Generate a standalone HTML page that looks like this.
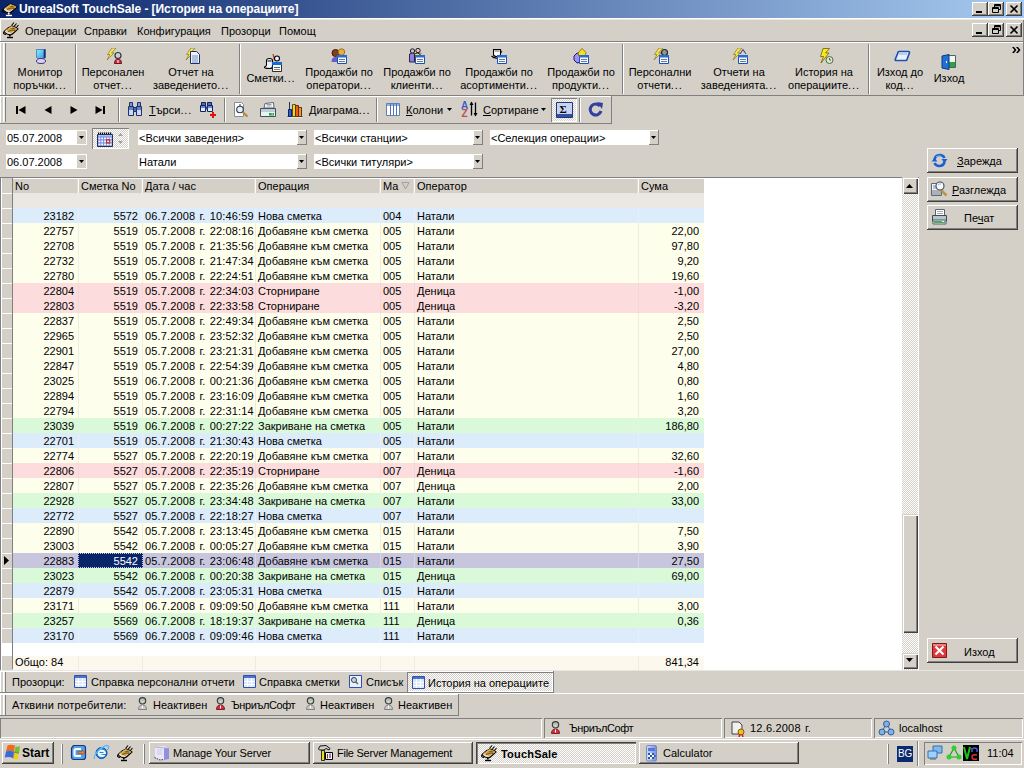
<!DOCTYPE html><html><head><meta charset="utf-8"><style>
html,body{margin:0;padding:0;width:1024px;height:768px;overflow:hidden;background:#d4d0c8;font-family:"Liberation Sans", sans-serif;font-size:11px;color:#000}
div{position:absolute;box-sizing:border-box}
.t{white-space:nowrap}
.r{text-align:right}
u{text-decoration:underline;text-underline-offset:1px;text-decoration-thickness:1px}
</style></head><body>
<div style="left:0px;top:0px;width:1024px;height:18px;background:linear-gradient(to right,#0a246a,#a6caf0)"></div>
<svg style="position:absolute;left:2px;top:0px" width="17" height="17" viewBox="0 0 17 17"><path d="M1 9.5 Q2 11 4 12 L7 13 Q9 12.5 10 11.5 L15 7 Q12 4.5 9 4 Q5 5 1 9.5z" fill="#f0d8d0" stroke="#000" stroke-width="1.1"/><path d="M2 8.5 L8.5 4 L14.5 6.5 L8 11z" fill="#c8a040"/><path d="M4 8 L8 6 L12 7 M5 9.5 L9 8 L12.5 8.5" stroke="#7a5010" stroke-width="1" fill="none"/><path d="M3 9 L9 5" stroke="#f8e8a0" stroke-width=".8"/><path d="M6.5 12.5 L7 14.5" stroke="#fff" stroke-width="1.6"/><path d="M4 15.5 H10" stroke="#fff" stroke-width="1.4"/><path d="M0.5 10 Q0 12 3 12.5" fill="none" stroke="#000" stroke-width="1.1"/></svg>
<div class="t" style="left:19px;top:2px;height:14px;line-height:14px;color:#fff;font-weight:bold;font-size:12px;letter-spacing:-0.08px">UnrealSoft TouchSale - [История на операциите]</div>
<div style="left:972px;top:2px;width:16px;height:14px;background:#d4d0c8;box-shadow: inset -1px -1px #404040, inset 1px 1px #fff, inset -2px -2px #808080"></div>
<div style="left:976px;top:11px;width:6px;height:2px;background:#000"></div>
<div style="left:988px;top:2px;width:16px;height:14px;background:#d4d0c8;box-shadow: inset -1px -1px #404040, inset 1px 1px #fff, inset -2px -2px #808080"></div>
<svg style="position:absolute;left:988px;top:2px" width="16" height="14" viewBox="0 0 16 14"><path d="M6.5 2.5h6v5h-6z M4.5 5.5h6v5h-6z" fill="none" stroke="#000"/><path d="M6 3h7v1.2H6z M4 6h7v1.2H4z" fill="#000"/><rect x="5" y="7" width="5" height="3" fill="#d4d0c8"/></svg>
<div style="left:1006px;top:2px;width:16px;height:14px;background:#d4d0c8;box-shadow: inset -1px -1px #404040, inset 1px 1px #fff, inset -2px -2px #808080"></div>
<svg style="position:absolute;left:1006px;top:2px" width="16" height="14" viewBox="0 0 16 14"><path d="M4.5 3.5 L11.5 10.5 M11.5 3.5 L4.5 10.5" stroke="#000" stroke-width="1.6"/></svg>
<div style="left:0px;top:18px;width:1024px;height:1px;background:#fff"></div>
<div style="left:0px;top:19px;width:1024px;height:1px;background:#ecebe6"></div>
<svg style="position:absolute;left:3px;top:22px" width="17" height="17" viewBox="0 0 17 17"><path d="M8.5 3.5 L11 0.5 M11 4.5 L13.5 1.5 M13 6 L15.5 3" stroke="#000" stroke-width="1.1"/><path d="M1 9.5 Q2 11 4 12 L7 13 Q9 12.5 10 11.5 L15 7 Q12 4.5 9 4 Q5 5 1 9.5z" fill="#f0d8d0" stroke="#000" stroke-width="1.1"/><path d="M2 8.5 L8.5 4 L14.5 6.5 L8 11z" fill="#c8a040"/><path d="M4 8 L8 6 L12 7 M5 9.5 L9 8 L12.5 8.5" stroke="#7a5010" stroke-width="1" fill="none"/><path d="M3 9 L9 5" stroke="#f8e8a0" stroke-width=".8"/><path d="M6.5 12.5 L7 14.5" stroke="#000" stroke-width="1.6"/><path d="M4 15.5 H10" stroke="#000" stroke-width="1.4"/><path d="M0.5 10 Q0 12 3 12.5" fill="none" stroke="#000" stroke-width="1.1"/></svg>
<div class="t" style="left:25px;top:25px;height:13px;line-height:13px;">Операции</div>
<div class="t" style="left:84px;top:25px;height:13px;line-height:13px;">Справки</div>
<div class="t" style="left:137px;top:25px;height:13px;line-height:13px;">Конфигурация</div>
<div class="t" style="left:221px;top:25px;height:13px;line-height:13px;">Прозорци</div>
<div class="t" style="left:279px;top:25px;height:13px;line-height:13px;">Помощ</div>
<div style="left:972px;top:23px;width:16px;height:14px;background:#d4d0c8;box-shadow: inset -1px -1px #404040, inset 1px 1px #fff, inset -2px -2px #808080"></div>
<div style="left:976px;top:32px;width:6px;height:2px;background:#000"></div>
<div style="left:988px;top:23px;width:16px;height:14px;background:#d4d0c8;box-shadow: inset -1px -1px #404040, inset 1px 1px #fff, inset -2px -2px #808080"></div>
<svg style="position:absolute;left:988px;top:23px" width="16" height="14" viewBox="0 0 16 14"><path d="M6.5 2.5h6v5h-6z M4.5 5.5h6v5h-6z" fill="none" stroke="#000"/><path d="M6 3h7v1.2H6z M4 6h7v1.2H4z" fill="#000"/><rect x="5" y="7" width="5" height="3" fill="#d4d0c8"/></svg>
<div style="left:1006px;top:23px;width:16px;height:14px;background:#d4d0c8;box-shadow: inset -1px -1px #404040, inset 1px 1px #fff, inset -2px -2px #808080"></div>
<svg style="position:absolute;left:1006px;top:23px" width="16" height="14" viewBox="0 0 16 14"><path d="M4.5 3.5 L11.5 10.5 M11.5 3.5 L4.5 10.5" stroke="#000" stroke-width="1.6"/></svg>
<div style="left:0px;top:41px;width:1024px;height:1px;background:#808080"></div>
<div style="left:0px;top:42px;width:1024px;height:1px;background:#fff"></div>
<div style="left:0px;top:20px;width:1px;height:21px;background:#fff"></div>
<div style="left:0px;top:43px;width:1px;height:52px;background:#fff"></div>
<div style="left:3px;top:43px;width:1px;height:52px;background:#fff"></div>
<div style="left:4px;top:43px;width:1px;height:52px;background:#eceae6"></div>
<div style="left:5px;top:43px;width:1px;height:52px;background:#808080"></div>
<div style="left:75px;top:44px;width:1px;height:50px;background:#808080"></div>
<div style="left:76px;top:44px;width:1px;height:50px;background:#fff"></div>
<div style="left:239px;top:44px;width:1px;height:50px;background:#808080"></div>
<div style="left:240px;top:44px;width:1px;height:50px;background:#fff"></div>
<div style="left:622px;top:44px;width:1px;height:50px;background:#808080"></div>
<div style="left:623px;top:44px;width:1px;height:50px;background:#fff"></div>
<div style="left:868px;top:44px;width:1px;height:50px;background:#808080"></div>
<div style="left:869px;top:44px;width:1px;height:50px;background:#fff"></div>
<svg style="position:absolute;left:33px;top:48px" width="16" height="16" viewBox="0 0 16 16"><defs><linearGradient id="gm" x1="0" y1="0" x2="1" y2="1"><stop offset="0" stop-color="#8af0ff"/><stop offset="1" stop-color="#2a88d8"/></linearGradient></defs><path d="M3.5 1.5h9v8l-4.5 3-4.5-3z" fill="url(#gm)" stroke="#4070b0" stroke-width=".8"/><path d="M11.5 1.5v8.5" stroke="#1a2a60" stroke-width="1.6"/><ellipse cx="8" cy="13" rx="4.5" ry="2.5" fill="#d8d0f8" stroke="#403870"/></svg>
<div class="t" style="left:-60px;top:66px;height:13px;line-height:13px;width:200px;text-align:center">Монитор</div>
<div class="t" style="left:-60px;top:79px;height:13px;line-height:13px;width:200px;text-align:center">поръчки<span style="letter-spacing:0.9px">...</span></div>
<svg style="position:absolute;left:106px;top:48px" width="16" height="16" viewBox="0 0 16 16"><path d="M6 0 L10 0 L5.5 5 L8 5 L1 12 L4 6.5 L1.5 6.5z" fill="#f8e858" stroke="#8a7020" stroke-width=".7" stroke-linejoin="round"/><circle cx="12" cy="7.5" r="3" fill="#c8d0c8" stroke="#303838" stroke-width="1.2"/><path d="M8.5 15.5 Q8.5 11 12 11 Q15.5 11 15.5 15.5z" fill="#d03040" stroke="#701020"/><path d="M12 12v3" stroke="#fff"/></svg>
<div class="t" style="left:13px;top:66px;height:13px;line-height:13px;width:200px;text-align:center">Персонален</div>
<div class="t" style="left:13px;top:79px;height:13px;line-height:13px;width:200px;text-align:center">отчет<span style="letter-spacing:0.9px">...</span></div>
<svg style="position:absolute;left:185px;top:48px" width="16" height="16" viewBox="0 0 16 16"><path d="M6 0 L10 0 L5.5 5 L8 5 L1 12 L4 6.5 L1.5 6.5z" fill="#f8e858" stroke="#8a7020" stroke-width=".7" stroke-linejoin="round"/><path d="M5.5 3.5h6l3 3v9h-9z" fill="#f0f4fc" stroke="#203060"/><path d="M7 8h6 M7 10h6 M7 12h6 M7 14h6" stroke="#7090c0"/></svg>
<div class="t" style="left:91px;top:66px;height:13px;line-height:13px;width:200px;text-align:center">Отчет на</div>
<div class="t" style="left:91px;top:79px;height:13px;line-height:13px;width:200px;text-align:center">заведението<span style="letter-spacing:0.9px">...</span></div>
<svg style="position:absolute;left:264px;top:54px" width="18" height="18" viewBox="0 0 18 18"><path d="M9 0 L10.5 6" stroke="#c03030" stroke-width="1.2"/><path d="M2.5 6.5 Q2.5 4.5 5.5 4.5 Q8.5 4.5 8.5 6.5 V12.5 Q8.5 14.5 5.5 14.5 Q0 14.5 0.5 13 Q2.5 12 2.5 11z" fill="#f0f4ff" stroke="#000" stroke-width="1.1"/><path d="M3.5 7h4" stroke="#000"/><circle cx="13" cy="4.5" r="2.5" fill="#f8f0f0" stroke="#000" stroke-width="1.1"/><path d="M8.5 8.5h9v9h-9z" fill="#f8fcff" stroke="#000" stroke-width=".8"/><path d="M8 8h10v3H8z" fill="#1a6ad0"/><path d="M10 13.5h6" stroke="#307080"/><path d="M10 15.5h6" stroke="#a08060"/></svg>
<div class="t" style="left:171px;top:72px;height:13px;line-height:13px;width:200px;text-align:center">Сметки<span style="letter-spacing:0.9px">...</span></div>
<svg style="position:absolute;left:331px;top:48px" width="16" height="16" viewBox="0 0 16 16"><circle cx="4.5" cy="5" r="3.5" fill="#804020" stroke="#401808"/><circle cx="10.5" cy="4" r="3.2" fill="#e8b040" stroke="#a07020"/><path d="M0.5 14 Q0.5 9 4.5 9 Q8 9 8 14z" fill="#6060d0"/><path d="M6.5 7.5h9v8h-9z" fill="#f4f8ff" stroke="#1a50b0"/><path d="M6 7h10v2.5H6z" fill="#2a6ad8"/><path d="M8 11.5h6 M8 13.5h6" stroke="#6a7a9a"/></svg>
<div class="t" style="left:239px;top:66px;height:13px;line-height:13px;width:200px;text-align:center">Продажби по</div>
<div class="t" style="left:239px;top:79px;height:13px;line-height:13px;width:200px;text-align:center">оператори<span style="letter-spacing:0.9px">...</span></div>
<svg style="position:absolute;left:409px;top:48px" width="16" height="16" viewBox="0 0 16 16"><circle cx="3.5" cy="3" r="2.2" fill="#c0c0c8" stroke="#202020"/><circle cx="9" cy="2.5" r="2.2" fill="#e0c0c0" stroke="#202020"/><path d="M0.5 14 V6 Q3.5 4 6 6 V14z" fill="#9080d0" stroke="#302060"/><path d="M5.5 13 V6 Q8.5 4 11 6 V8z" fill="#f0e040" stroke="#302010"/><path d="M10 5 Q12 4 13 6" fill="#d03030"/><path d="M6.5 7.5h9v8h-9z" fill="#f4f8ff" stroke="#1a50b0"/><path d="M6 7h10v2.5H6z" fill="#2a6ad8"/><path d="M8 11.5h6 M8 13.5h6" stroke="#6a7a9a"/></svg>
<div class="t" style="left:317px;top:66px;height:13px;line-height:13px;width:200px;text-align:center">Продажби по</div>
<div class="t" style="left:317px;top:79px;height:13px;line-height:13px;width:200px;text-align:center">клиенти<span style="letter-spacing:0.9px">...</span></div>
<svg style="position:absolute;left:491px;top:48px" width="16" height="16" viewBox="0 0 16 16"><path d="M2.5 1.5h7v5q0 2-3.5 2t-3.5-2z" fill="#fff" stroke="#000" stroke-width="1.1"/><path d="M9.5 2.5 Q12 3 9.5 5.5" fill="none" stroke="#000"/><path d="M0.5 8 Q3 10.5 7 10" fill="none" stroke="#000" stroke-width="1.1"/><path d="M3.5 3h5" stroke="#606060"/><path d="M6.5 7.5h9v8h-9z" fill="#f4f8ff" stroke="#1a50b0"/><path d="M6 7h10v2.5H6z" fill="#2a6ad8"/><path d="M8 11.5h6 M8 13.5h6" stroke="#6a7a9a"/></svg>
<div class="t" style="left:399px;top:66px;height:13px;line-height:13px;width:200px;text-align:center">Продажби по</div>
<div class="t" style="left:399px;top:79px;height:13px;line-height:13px;width:200px;text-align:center">асортименти<span style="letter-spacing:0.9px">...</span></div>
<svg style="position:absolute;left:573px;top:48px" width="16" height="16" viewBox="0 0 16 16"><path d="M1 8 L4 5 L8 6 L8 14 L4 15 L1 12z" fill="#a090f0" stroke="#201860"/><path d="M5 5 L9 0.5 L13 4.5 L12 8 H6z" fill="#f8e020" stroke="#806000" stroke-width=".8"/><path d="M6.5 7.5h9v8h-9z" fill="#f4f8ff" stroke="#1a50b0"/><path d="M6 7h10v2.5H6z" fill="#2a6ad8"/><path d="M8 11.5h6 M8 13.5h6" stroke="#6a7a9a"/></svg>
<div class="t" style="left:481px;top:66px;height:13px;line-height:13px;width:200px;text-align:center">Продажби по</div>
<div class="t" style="left:481px;top:79px;height:13px;line-height:13px;width:200px;text-align:center">продукти<span style="letter-spacing:0.9px">...</span></div>
<svg style="position:absolute;left:653px;top:48px" width="16" height="16" viewBox="0 0 16 16"><path d="M6 0 L10 0 L5.5 5 L8 5 L1 12 L4 6.5 L1.5 6.5z" fill="#f8e858" stroke="#8a7020" stroke-width=".7" stroke-linejoin="round"/><circle cx="11.5" cy="4.5" r="3" fill="#909890" stroke="#202820" stroke-width="1.2"/><path d="M6.5 7.5h9v8h-9z" fill="#f4f8ff" stroke="#1a50b0"/><path d="M6 7h10v2.5H6z" fill="#2a6ad8"/><path d="M8 11.5h6 M8 13.5h6" stroke="#6a7a9a"/></svg>
<div class="t" style="left:560px;top:66px;height:13px;line-height:13px;width:200px;text-align:center">Персонални</div>
<div class="t" style="left:560px;top:79px;height:13px;line-height:13px;width:200px;text-align:center">отчети<span style="letter-spacing:0.9px">...</span></div>
<svg style="position:absolute;left:732px;top:48px" width="16" height="16" viewBox="0 0 16 16"><path d="M6 0 L10 0 L5.5 5 L8 5 L1 12 L4 6.5 L1.5 6.5z" fill="#f8e858" stroke="#8a7020" stroke-width=".7" stroke-linejoin="round"/><path d="M8 6 L11 1.5 L14 6" fill="none" stroke="#303860"/><path d="M6.5 7.5h9v8h-9z" fill="#f4f8ff" stroke="#1a50b0"/><path d="M6 7h10v2.5H6z" fill="#2a6ad8"/><path d="M8 11.5h6 M8 13.5h6" stroke="#6a7a9a"/></svg>
<div class="t" style="left:639px;top:66px;height:13px;line-height:13px;width:200px;text-align:center">Отчети на</div>
<div class="t" style="left:639px;top:79px;height:13px;line-height:13px;width:200px;text-align:center">заведенията<span style="letter-spacing:0.9px">...</span></div>
<svg style="position:absolute;left:818px;top:48px" width="16" height="16" viewBox="0 0 16 16"><path d="M5 0.5 L11.5 0.5 L7.5 5 L11 5 L3 15 L5.5 8.5 L2.5 8.5z" fill="#f8e820" stroke="#706000" stroke-width=".8" stroke-linejoin="round"/><circle cx="11.5" cy="12" r="3.5" fill="#d8e8d0" stroke="#507040"/><path d="M11.5 10v2h1.5" stroke="#404040" fill="none" stroke-width=".8"/></svg>
<div class="t" style="left:724px;top:66px;height:13px;line-height:13px;width:200px;text-align:center">История на</div>
<div class="t" style="left:724px;top:79px;height:13px;line-height:13px;width:200px;text-align:center">операциите<span style="letter-spacing:0.9px">...</span></div>
<svg style="position:absolute;left:893px;top:49px" width="18" height="14" viewBox="0 0 18 14"><path d="M5 3.5 Q5 2.5 6 2.5 H15.5 Q16.5 2.5 16.5 3.5 L14 10.5 Q13.8 11.5 12.8 11.5 H3 Q2 11.5 2.2 10.5z" fill="#e8f0ff" stroke="#2050b0" stroke-width="1.6"/><path d="M6 5h8" stroke="#90a8d8"/><path d="M0 5h2 M0 7h2" stroke="#b0c8e8"/></svg>
<div class="t" style="left:800px;top:66px;height:13px;line-height:13px;width:200px;text-align:center">Изход до</div>
<div class="t" style="left:800px;top:79px;height:13px;line-height:13px;width:200px;text-align:center">код<span style="letter-spacing:0.9px">...</span></div>
<svg style="position:absolute;left:941px;top:54px" width="16" height="16" viewBox="0 0 16 16"><path d="M7.5 1.5h7v12h-7z" fill="#f0f8f0" stroke="#506070"/><path d="M8 8h6v5H8z" fill="#30a040"/><path d="M1 2 L8 0.5 V15.5 L1 14z" fill="#2070d8" stroke="#103878"/><path d="M5 7h1v2H5z" fill="#fff"/></svg>
<div class="t" style="left:849px;top:72px;height:13px;line-height:13px;width:200px;text-align:center">Изход</div>
<svg style="position:absolute;left:1012px;top:47px" width="9" height="6" viewBox="0 0 9 6"><path d="M0 0h2l2.5 3L2 6H0l2.5-3z M4 0h2l2.5 3L6 6H4l2.5-3z" fill="#000"/></svg>
<div style="left:1023px;top:20px;width:1px;height:76px;background:#808080"></div>
<div style="left:0px;top:95px;width:1024px;height:1px;background:#808080"></div>
<div style="left:0px;top:96px;width:612px;height:1px;background:#fff"></div>
<div style="left:0px;top:96px;width:612px;height:28px;background:#d4d0c8;box-shadow: inset -1px -1px #808080, inset 1px 1px #fff"></div>
<div style="left:3px;top:97px;width:1px;height:25px;background:#fff"></div>
<div style="left:4px;top:97px;width:1px;height:25px;background:#eceae6"></div>
<div style="left:5px;top:97px;width:1px;height:25px;background:#808080"></div>
<div style="left:118px;top:98px;width:1px;height:24px;background:#808080"></div>
<div style="left:119px;top:98px;width:1px;height:24px;background:#fff"></div>
<div style="left:224px;top:98px;width:1px;height:24px;background:#808080"></div>
<div style="left:225px;top:98px;width:1px;height:24px;background:#fff"></div>
<div style="left:376px;top:98px;width:1px;height:24px;background:#808080"></div>
<div style="left:377px;top:98px;width:1px;height:24px;background:#fff"></div>
<div style="left:579px;top:98px;width:1px;height:24px;background:#808080"></div>
<div style="left:580px;top:98px;width:1px;height:24px;background:#fff"></div>
<svg style="position:absolute;left:16px;top:106px" width="10" height="8" viewBox="0 0 10 8"><path d="M0 0h2v8H0z M9.5 0 L2.5 4 L9.5 8z" fill="#000"/></svg>
<svg style="position:absolute;left:44px;top:106px" width="8" height="8" viewBox="0 0 8 8"><path d="M7.5 0 L0.5 4 L7.5 8z" fill="#000"/></svg>
<svg style="position:absolute;left:70px;top:106px" width="8" height="8" viewBox="0 0 8 8"><path d="M0.5 0 L7.5 4 L0.5 8z" fill="#000"/></svg>
<svg style="position:absolute;left:95px;top:106px" width="10" height="8" viewBox="0 0 10 8"><path d="M8 0h2v8H8z M0.5 0 L7.5 4 L0.5 8z" fill="#000"/></svg>
<svg style="position:absolute;left:127px;top:101px" width="16" height="16" viewBox="0 0 16 16"><path d="M2.5 1.5h3v4h-3z M10.5 1.5h3v4h-3z" fill="#8098c8" stroke="#203070"/><path d="M1.5 5.5h5v9h-5z M9.5 5.5h5v9h-5z" fill="#c8d8f0" stroke="#203070"/><path d="M6.5 6.5h3v4h-3z" fill="#5068a8" stroke="#203070"/><path d="M2 6h4v3H2z M10 6h4v3h-4z" fill="#6080c0"/></svg>
<div class="t" style="left:149px;top:104px;height:13px;line-height:13px;"><u>Т</u>ърси<span style="letter-spacing:0.9px">...</span></div>
<svg style="position:absolute;left:200px;top:101px" width="18" height="18" viewBox="0 0 18 18"><path d="M1.5 1.5h4v3h-4z M7.5 1.5h4v3h-4z" fill="#5070b0" stroke="#102060"/><path d="M0.5 4.5h5v6h-5z M7.5 4.5h5v6h-5z" fill="#e0ecff" stroke="#102060"/><path d="M5.5 5.5h2v3h-2z" fill="#304890"/><path d="M1 5h4v2H1z M8 5h4v2H8z" fill="#6a88c8"/><path d="M12 11h2v6h-2z M10 13h6v2h-6z" fill="#e01010"/></svg>
<svg style="position:absolute;left:234px;top:102px" width="16" height="16" viewBox="0 0 16 16"><path d="M0.5 0.5h7l2 2v12h-9z" fill="#fff" stroke="#8090a0"/><circle cx="6" cy="7.5" r="3.3" fill="#e8f0f8" stroke="#303840" stroke-width="1.1"/><path d="M6 2 L6 4" stroke="#303840"/><path d="M8.5 10 L13.5 14.5" stroke="#b08840" stroke-width="2.2"/></svg>
<svg style="position:absolute;left:260px;top:102px" width="16" height="16" viewBox="0 0 16 16"><path d="M5 1.5 L13.5 0.5 L14 6 L4 6z" fill="#fff" stroke="#5a6470"/><path d="M6.5 2.5h5 M6.5 4h5" stroke="#90a0b0"/><path d="M0.5 6.5h15v8h-15z" fill="#c0ccd4" stroke="#405060"/><path d="M1 10h14v4H1z" fill="#e8f4f0"/><path d="M9 11h5v2.5H9z" fill="#30a050"/><path d="M11.5 11.5h1.5v1h-1.5z" fill="#c0ffc0"/></svg>
<svg style="position:absolute;left:287px;top:101px" width="16" height="17" viewBox="0 0 16 17"><path d="M0.5 15.5h15" stroke="#304060"/><path d="M0.5 16.5h15" stroke="#e0e8f0"/><path d="M1.5 8.5h3v7h-3z" fill="#3060d0" stroke="#102060"/><path d="M2.5 1v7" stroke="#203060"/><path d="M5.5 3.5h3v12h-3z" fill="#f0d820" stroke="#605010"/><path d="M8.5 4.5h3v11h-3z" fill="#e86020" stroke="#603010"/><path d="M11.5 6.5h3v9h-3z" fill="#f09830" stroke="#603010"/></svg>
<div class="t" style="left:309px;top:104px;height:13px;line-height:13px;">Диаграма<span style="letter-spacing:0.9px">...</span></div>
<svg style="position:absolute;left:385px;top:101px" width="16" height="16" viewBox="0 0 16 16"><path d="M1.5 2.5h13v12h-13z" fill="#fff" stroke="#6080b0"/><path d="M2 3h12v2H2z" fill="#90b0e0"/><path d="M5.5 3v11 M8.5 3v11 M11.5 3v11" stroke="#5070c0"/></svg>
<div class="t" style="left:406px;top:104px;height:13px;line-height:13px;"><u>К</u>олони</div>
<svg style="position:absolute;left:447px;top:108px" width="5" height="3" viewBox="0 0 5 3"><path d="M0 0h5L2.5 3z" fill="#000"/></svg>
<svg style="position:absolute;left:461px;top:100px" width="18" height="18" viewBox="0 0 18 18"><text x="0" y="8.5" font-family="Liberation Sans" font-size="10" font-weight="bold" fill="#3a60c8">A</text><text x="0.5" y="17" font-family="Liberation Sans" font-size="10" font-weight="bold" fill="#c05050">Z</text><path d="M10.5 2.5v13 M14.5 2.5v13" stroke="#000" stroke-width="1.3"/><path d="M8.5 5 L10.5 1.5 L12.5 5z M12.5 13 L14.5 16.5 L16.5 13z" fill="#000"/></svg>
<div class="t" style="left:483px;top:104px;height:13px;line-height:13px;"><u>С</u>ортиране</div>
<svg style="position:absolute;left:541px;top:108px" width="5" height="3" viewBox="0 0 5 3"><path d="M0 0h5L2.5 3z" fill="#000"/></svg>
<div style="left:551px;top:98px;width:26px;height:24px;background-color:#fff;background-image:linear-gradient(45deg,#d4d0c8 25%,transparent 25%,transparent 75%,#d4d0c8 75%),linear-gradient(45deg,#d4d0c8 25%,transparent 25%,transparent 75%,#d4d0c8 75%);background-size:2px 2px;background-position:0 0,1px 1px;box-shadow: inset 1px 1px #808080, inset -1px -1px #fff"></div>
<svg style="position:absolute;left:556px;top:102px" width="17" height="16" viewBox="0 0 17 16"><path d="M0.5 0.5h16v15H0.5z" fill="#c8d4f0" stroke="#203880"/><path d="M1 12h15v3H1z" fill="#3050a0"/><text x="3.5" y="11" font-family="Liberation Serif" font-size="11" font-weight="bold" fill="#000">&#931;</text></svg>
<svg style="position:absolute;left:587px;top:101px" width="18" height="17" viewBox="0 0 18 17"><path d="M13 5 A5.5 5.5 0 1 0 14 10" fill="none" stroke="#3040a0" stroke-width="3"/><path d="M10 1 L16 2 L15 8z" fill="#3040a0"/></svg>
<div style="left:6px;top:130px;width:81px;height:15px;background:#fff"></div>
<div class="t" style="left:7px;top:131px;height:14px;line-height:14px;font-size:11px">05.07.2008</div>
<div style="left:77px;top:131px;width:9px;height:13px;background:#d4d0c8"></div>
<svg style="position:absolute;left:79px;top:136px" width="5" height="3" viewBox="0 0 5 3"><path d="M0 0h5L2.5 3z" fill="#000"/></svg>
<div style="left:6px;top:154px;width:81px;height:15px;background:#fff"></div>
<div class="t" style="left:7px;top:155px;height:14px;line-height:14px;font-size:11px">06.07.2008</div>
<div style="left:77px;top:155px;width:9px;height:13px;background:#d4d0c8"></div>
<svg style="position:absolute;left:79px;top:160px" width="5" height="3" viewBox="0 0 5 3"><path d="M0 0h5L2.5 3z" fill="#000"/></svg>
<div style="left:92px;top:128px;width:37px;height:21px;background-color:#fff;background-image:linear-gradient(45deg,#d4d0c8 25%,transparent 25%,transparent 75%,#d4d0c8 75%),linear-gradient(45deg,#d4d0c8 25%,transparent 25%,transparent 75%,#d4d0c8 75%);background-size:2px 2px;background-position:0 0,1px 1px;box-shadow: inset 1px 1px #808080, inset -1px -1px #fff"></div>
<svg style="position:absolute;left:97px;top:132px" width="16" height="15" viewBox="0 0 16 15"><defs><linearGradient id="gc" x1="0" y1="0" x2="1" y2="1"><stop offset="0" stop-color="#6a80e0"/><stop offset="1" stop-color="#8898d8"/></linearGradient></defs><path d="M0.5 2.5h15v12h-15z" fill="url(#gc)" stroke="#203060"/><path d="M1 3h14v1.5H1z" fill="#a8c0f8"/><rect x="1" y="0.5" width="1.2" height="1.5" fill="#000"/><rect x="3" y="0.5" width="1.2" height="1.5" fill="#000"/><rect x="5" y="0.5" width="1.2" height="1.5" fill="#000"/><rect x="7" y="0.5" width="1.2" height="1.5" fill="#000"/><rect x="9" y="0.5" width="1.2" height="1.5" fill="#000"/><rect x="11" y="0.5" width="1.2" height="1.5" fill="#000"/><rect x="13" y="0.5" width="1.2" height="1.5" fill="#000"/><rect x="1.5" y="5.5" width="1.8" height="1.8" fill="#fff"/><rect x="4.3" y="5.5" width="1.8" height="1.8" fill="#fff"/><rect x="7.1" y="5.5" width="1.8" height="1.8" fill="#fff"/><rect x="9.899999999999999" y="5.5" width="1.8" height="1.8" fill="#fff"/><rect x="12.7" y="5.5" width="1.8" height="1.8" fill="#fff"/><rect x="1.5" y="8.5" width="1.8" height="1.8" fill="#fff"/><rect x="4.3" y="8.5" width="1.8" height="1.8" fill="#fff"/><rect x="7.1" y="8.5" width="1.8" height="1.8" fill="#fff"/><rect x="9.899999999999999" y="8.5" width="1.8" height="1.8" fill="#fff"/><rect x="12.7" y="8.5" width="1.8" height="1.8" fill="#fff"/><rect x="1.5" y="11.5" width="1.8" height="1.8" fill="#fff"/><rect x="4.3" y="11.5" width="1.8" height="1.8" fill="#fff"/><rect x="7.1" y="11.5" width="1.8" height="1.8" fill="#fff"/><rect x="9.899999999999999" y="11.5" width="1.8" height="1.8" fill="#fff"/><rect x="12.7" y="11.5" width="1.8" height="1.8" fill="#fff"/><rect x="9.6" y="7.8" width="3.2" height="3.2" fill="none" stroke="#c02020" stroke-width="1"/></svg>
<svg style="position:absolute;left:117px;top:132px" width="7" height="13" viewBox="0 0 7 13"><path d="M3.5 1 L6 4 H1z M1 9 H6 L3.5 12z" fill="#a0a0a0"/></svg>
<div style="left:138px;top:130px;width:169px;height:15px;background:#fff"></div>
<div class="t" style="left:139px;top:132px;height:13px;line-height:13px;">&lt;Всички заведения&gt;</div>
<div style="left:297px;top:130px;width:10px;height:15px;background:#d4d0c8;box-shadow: inset -1px -1px #808080, inset 1px 1px #fff"></div>
<svg style="position:absolute;left:299px;top:136px" width="5" height="3" viewBox="0 0 5 3"><path d="M0 0h5L2.5 3z" fill="#000"/></svg>
<div style="left:314px;top:130px;width:169px;height:15px;background:#fff"></div>
<div class="t" style="left:315px;top:132px;height:13px;line-height:13px;">&lt;Всички станции&gt;</div>
<div style="left:473px;top:130px;width:10px;height:15px;background:#d4d0c8;box-shadow: inset -1px -1px #808080, inset 1px 1px #fff"></div>
<svg style="position:absolute;left:475px;top:136px" width="5" height="3" viewBox="0 0 5 3"><path d="M0 0h5L2.5 3z" fill="#000"/></svg>
<div style="left:490px;top:130px;width:169px;height:15px;background:#fff"></div>
<div class="t" style="left:491px;top:132px;height:13px;line-height:13px;">&lt;Селекция операции&gt;</div>
<div style="left:649px;top:130px;width:10px;height:15px;background:#d4d0c8;box-shadow: inset -1px -1px #808080, inset 1px 1px #fff"></div>
<svg style="position:absolute;left:651px;top:136px" width="5" height="3" viewBox="0 0 5 3"><path d="M0 0h5L2.5 3z" fill="#000"/></svg>
<div style="left:138px;top:154px;width:169px;height:15px;background:#fff"></div>
<div class="t" style="left:139px;top:156px;height:13px;line-height:13px;">Натали</div>
<div style="left:297px;top:154px;width:10px;height:15px;background:#d4d0c8;box-shadow: inset -1px -1px #808080, inset 1px 1px #fff"></div>
<svg style="position:absolute;left:299px;top:160px" width="5" height="3" viewBox="0 0 5 3"><path d="M0 0h5L2.5 3z" fill="#000"/></svg>
<div style="left:314px;top:154px;width:169px;height:15px;background:#fff"></div>
<div class="t" style="left:315px;top:156px;height:13px;line-height:13px;">&lt;Всички титуляри&gt;</div>
<div style="left:473px;top:154px;width:10px;height:15px;background:#d4d0c8;box-shadow: inset -1px -1px #808080, inset 1px 1px #fff"></div>
<svg style="position:absolute;left:475px;top:160px" width="5" height="3" viewBox="0 0 5 3"><path d="M0 0h5L2.5 3z" fill="#000"/></svg>
<div style="left:0px;top:177px;width:919px;height:493px;background:#fff"></div>
<div style="left:0px;top:177px;width:919px;height:1px;background:#808080"></div>
<div style="left:0px;top:177px;width:1px;height:493px;background:#808080"></div>
<div style="left:918px;top:178px;width:1px;height:492px;background:#fff"></div>
<div style="left:1px;top:178px;width:12px;height:492px;background:#d4d0c8"></div>
<div style="left:1px;top:178px;width:1px;height:492px;background:#fff"></div>
<div style="left:12px;top:178px;width:1px;height:491px;background:#808080"></div>
<div style="left:13px;top:178px;width:691px;height:1px;background:#fff"></div>
<div style="left:13px;top:179px;width:64px;height:14px;background:#d4d0c8"></div>
<div style="left:77px;top:179px;width:1px;height:14px;background:#dedbd5"></div>
<div style="left:78px;top:179px;width:1px;height:14px;background:#fdfcfa"></div>
<div style="left:79px;top:179px;width:62px;height:14px;background:#d4d0c8"></div>
<div style="left:141px;top:179px;width:1px;height:14px;background:#dedbd5"></div>
<div style="left:142px;top:179px;width:1px;height:14px;background:#fdfcfa"></div>
<div style="left:143px;top:179px;width:111px;height:14px;background:#d4d0c8"></div>
<div style="left:254px;top:179px;width:1px;height:14px;background:#dedbd5"></div>
<div style="left:255px;top:179px;width:1px;height:14px;background:#fdfcfa"></div>
<div style="left:256px;top:179px;width:123px;height:14px;background:#d4d0c8"></div>
<div style="left:379px;top:179px;width:1px;height:14px;background:#dedbd5"></div>
<div style="left:380px;top:179px;width:1px;height:14px;background:#fdfcfa"></div>
<div style="left:381px;top:179px;width:32px;height:14px;background:#d4d0c8"></div>
<div style="left:413px;top:179px;width:1px;height:14px;background:#dedbd5"></div>
<div style="left:414px;top:179px;width:1px;height:14px;background:#fdfcfa"></div>
<div style="left:415px;top:179px;width:222px;height:14px;background:#d4d0c8"></div>
<div style="left:637px;top:179px;width:1px;height:14px;background:#dedbd5"></div>
<div style="left:638px;top:179px;width:1px;height:14px;background:#fdfcfa"></div>
<div style="left:639px;top:179px;width:65px;height:14px;background:#d4d0c8"></div>
<div class="t" style="left:15px;top:180px;height:13px;line-height:13px;">No</div>
<div class="t" style="left:81px;top:180px;height:13px;line-height:13px;">Сметка No</div>
<div class="t" style="left:145px;top:180px;height:13px;line-height:13px;">Дата / час</div>
<div class="t" style="left:258px;top:180px;height:13px;line-height:13px;">Операция</div>
<div class="t" style="left:383px;top:180px;height:13px;line-height:13px;">Ма</div>
<div class="t" style="left:417px;top:180px;height:13px;line-height:13px;">Оператор</div>
<div class="t" style="left:641px;top:180px;height:13px;line-height:13px;">Сума</div>
<svg style="position:absolute;left:401px;top:181px" width="9" height="9" viewBox="0 0 9 9"><path d="M1 1.5h7L4.5 8z" fill="none" stroke="#a0a0a0"/></svg>
<div style="left:13px;top:193px;width:691px;height:15px;background:#ebe8e3"></div>
<div style="left:1px;top:193px;width:11px;height:1px;background:#fff"></div>
<div style="left:0;top:0;width:1024px;height:768px">
<div style="left:13px;top:208px;width:691px;height:15px;background:#dcecfa"></div>
<div style="left:1px;top:208px;width:11px;height:1px;background:#fff"></div>
<div style="left:78px;top:208px;width:1px;height:15px;background:#e8f0f8"></div>
<div style="left:142px;top:208px;width:1px;height:15px;background:#e8f0f8"></div>
<div style="left:255px;top:208px;width:1px;height:15px;background:#e8f0f8"></div>
<div style="left:380px;top:208px;width:1px;height:15px;background:#e8f0f8"></div>
<div style="left:414px;top:208px;width:1px;height:15px;background:#e8f0f8"></div>
<div style="left:638px;top:208px;width:1px;height:15px;background:#e8f0f8"></div>
<div class="t" style="left:13px;top:209px;height:14px;line-height:14px;width:61px;text-align:right;color:#000">23182</div>
<div class="t" style="left:79px;top:209px;height:14px;line-height:14px;width:59px;text-align:right;color:#000">5572</div>
<div class="t" style="left:145px;top:209px;height:14px;line-height:14px;color:#000;word-spacing:1px;letter-spacing:0.15px">06.7.2008 г. 10:46:59</div>
<div style="left:256px;top:208px;width:124px;height:15px;overflow:hidden"><div class="t" style="left:2px;top:1px;line-height:14px">Нова сметка</div></div>
<div class="t" style="left:383px;top:209px;height:14px;line-height:14px;color:#000">004</div>
<div class="t" style="left:417px;top:209px;height:14px;line-height:14px;color:#000">Натали</div>
<div class="t" style="left:639px;top:209px;height:14px;line-height:14px;width:60px;text-align:right;color:#000"></div>
<div style="left:13px;top:223px;width:691px;height:15px;background:#fefeec"></div>
<div style="left:1px;top:223px;width:11px;height:1px;background:#fff"></div>
<div style="left:78px;top:223px;width:1px;height:15px;background:#eeeee0"></div>
<div style="left:142px;top:223px;width:1px;height:15px;background:#eeeee0"></div>
<div style="left:255px;top:223px;width:1px;height:15px;background:#eeeee0"></div>
<div style="left:380px;top:223px;width:1px;height:15px;background:#eeeee0"></div>
<div style="left:414px;top:223px;width:1px;height:15px;background:#eeeee0"></div>
<div style="left:638px;top:223px;width:1px;height:15px;background:#eeeee0"></div>
<div class="t" style="left:13px;top:224px;height:14px;line-height:14px;width:61px;text-align:right;color:#000">22757</div>
<div class="t" style="left:79px;top:224px;height:14px;line-height:14px;width:59px;text-align:right;color:#000">5519</div>
<div class="t" style="left:145px;top:224px;height:14px;line-height:14px;color:#000;word-spacing:1px;letter-spacing:0.15px">05.7.2008 г. 22:08:16</div>
<div style="left:256px;top:223px;width:124px;height:15px;overflow:hidden"><div class="t" style="left:2px;top:1px;line-height:14px">Добавяне към сметка</div></div>
<div class="t" style="left:383px;top:224px;height:14px;line-height:14px;color:#000">005</div>
<div class="t" style="left:417px;top:224px;height:14px;line-height:14px;color:#000">Натали</div>
<div class="t" style="left:639px;top:224px;height:14px;line-height:14px;width:60px;text-align:right;color:#000">22,00</div>
<div style="left:13px;top:238px;width:691px;height:15px;background:#fefeec"></div>
<div style="left:1px;top:238px;width:11px;height:1px;background:#fff"></div>
<div style="left:78px;top:238px;width:1px;height:15px;background:#eeeee0"></div>
<div style="left:142px;top:238px;width:1px;height:15px;background:#eeeee0"></div>
<div style="left:255px;top:238px;width:1px;height:15px;background:#eeeee0"></div>
<div style="left:380px;top:238px;width:1px;height:15px;background:#eeeee0"></div>
<div style="left:414px;top:238px;width:1px;height:15px;background:#eeeee0"></div>
<div style="left:638px;top:238px;width:1px;height:15px;background:#eeeee0"></div>
<div class="t" style="left:13px;top:239px;height:14px;line-height:14px;width:61px;text-align:right;color:#000">22708</div>
<div class="t" style="left:79px;top:239px;height:14px;line-height:14px;width:59px;text-align:right;color:#000">5519</div>
<div class="t" style="left:145px;top:239px;height:14px;line-height:14px;color:#000;word-spacing:1px;letter-spacing:0.15px">05.7.2008 г. 21:35:56</div>
<div style="left:256px;top:238px;width:124px;height:15px;overflow:hidden"><div class="t" style="left:2px;top:1px;line-height:14px">Добавяне към сметка</div></div>
<div class="t" style="left:383px;top:239px;height:14px;line-height:14px;color:#000">005</div>
<div class="t" style="left:417px;top:239px;height:14px;line-height:14px;color:#000">Натали</div>
<div class="t" style="left:639px;top:239px;height:14px;line-height:14px;width:60px;text-align:right;color:#000">97,80</div>
<div style="left:13px;top:253px;width:691px;height:15px;background:#fefeec"></div>
<div style="left:1px;top:253px;width:11px;height:1px;background:#fff"></div>
<div style="left:78px;top:253px;width:1px;height:15px;background:#eeeee0"></div>
<div style="left:142px;top:253px;width:1px;height:15px;background:#eeeee0"></div>
<div style="left:255px;top:253px;width:1px;height:15px;background:#eeeee0"></div>
<div style="left:380px;top:253px;width:1px;height:15px;background:#eeeee0"></div>
<div style="left:414px;top:253px;width:1px;height:15px;background:#eeeee0"></div>
<div style="left:638px;top:253px;width:1px;height:15px;background:#eeeee0"></div>
<div class="t" style="left:13px;top:254px;height:14px;line-height:14px;width:61px;text-align:right;color:#000">22732</div>
<div class="t" style="left:79px;top:254px;height:14px;line-height:14px;width:59px;text-align:right;color:#000">5519</div>
<div class="t" style="left:145px;top:254px;height:14px;line-height:14px;color:#000;word-spacing:1px;letter-spacing:0.15px">05.7.2008 г. 21:47:34</div>
<div style="left:256px;top:253px;width:124px;height:15px;overflow:hidden"><div class="t" style="left:2px;top:1px;line-height:14px">Добавяне към сметка</div></div>
<div class="t" style="left:383px;top:254px;height:14px;line-height:14px;color:#000">005</div>
<div class="t" style="left:417px;top:254px;height:14px;line-height:14px;color:#000">Натали</div>
<div class="t" style="left:639px;top:254px;height:14px;line-height:14px;width:60px;text-align:right;color:#000">9,20</div>
<div style="left:13px;top:268px;width:691px;height:15px;background:#fefeec"></div>
<div style="left:1px;top:268px;width:11px;height:1px;background:#fff"></div>
<div style="left:78px;top:268px;width:1px;height:15px;background:#eeeee0"></div>
<div style="left:142px;top:268px;width:1px;height:15px;background:#eeeee0"></div>
<div style="left:255px;top:268px;width:1px;height:15px;background:#eeeee0"></div>
<div style="left:380px;top:268px;width:1px;height:15px;background:#eeeee0"></div>
<div style="left:414px;top:268px;width:1px;height:15px;background:#eeeee0"></div>
<div style="left:638px;top:268px;width:1px;height:15px;background:#eeeee0"></div>
<div class="t" style="left:13px;top:269px;height:14px;line-height:14px;width:61px;text-align:right;color:#000">22780</div>
<div class="t" style="left:79px;top:269px;height:14px;line-height:14px;width:59px;text-align:right;color:#000">5519</div>
<div class="t" style="left:145px;top:269px;height:14px;line-height:14px;color:#000;word-spacing:1px;letter-spacing:0.15px">05.7.2008 г. 22:24:51</div>
<div style="left:256px;top:268px;width:124px;height:15px;overflow:hidden"><div class="t" style="left:2px;top:1px;line-height:14px">Добавяне към сметка</div></div>
<div class="t" style="left:383px;top:269px;height:14px;line-height:14px;color:#000">005</div>
<div class="t" style="left:417px;top:269px;height:14px;line-height:14px;color:#000">Натали</div>
<div class="t" style="left:639px;top:269px;height:14px;line-height:14px;width:60px;text-align:right;color:#000">19,60</div>
<div style="left:13px;top:283px;width:691px;height:15px;background:#fcdcdc"></div>
<div style="left:1px;top:283px;width:11px;height:1px;background:#fff"></div>
<div style="left:78px;top:283px;width:1px;height:15px;background:#f0d8d8"></div>
<div style="left:142px;top:283px;width:1px;height:15px;background:#f0d8d8"></div>
<div style="left:255px;top:283px;width:1px;height:15px;background:#f0d8d8"></div>
<div style="left:380px;top:283px;width:1px;height:15px;background:#f0d8d8"></div>
<div style="left:414px;top:283px;width:1px;height:15px;background:#f0d8d8"></div>
<div style="left:638px;top:283px;width:1px;height:15px;background:#f0d8d8"></div>
<div class="t" style="left:13px;top:284px;height:14px;line-height:14px;width:61px;text-align:right;color:#000">22804</div>
<div class="t" style="left:79px;top:284px;height:14px;line-height:14px;width:59px;text-align:right;color:#000">5519</div>
<div class="t" style="left:145px;top:284px;height:14px;line-height:14px;color:#000;word-spacing:1px;letter-spacing:0.15px">05.7.2008 г. 22:34:03</div>
<div style="left:256px;top:283px;width:124px;height:15px;overflow:hidden"><div class="t" style="left:2px;top:1px;line-height:14px">Сторниране</div></div>
<div class="t" style="left:383px;top:284px;height:14px;line-height:14px;color:#000">005</div>
<div class="t" style="left:417px;top:284px;height:14px;line-height:14px;color:#000">Деница</div>
<div class="t" style="left:639px;top:284px;height:14px;line-height:14px;width:60px;text-align:right;color:#000">-1,00</div>
<div style="left:13px;top:298px;width:691px;height:15px;background:#fcdcdc"></div>
<div style="left:1px;top:298px;width:11px;height:1px;background:#fff"></div>
<div style="left:78px;top:298px;width:1px;height:15px;background:#f0d8d8"></div>
<div style="left:142px;top:298px;width:1px;height:15px;background:#f0d8d8"></div>
<div style="left:255px;top:298px;width:1px;height:15px;background:#f0d8d8"></div>
<div style="left:380px;top:298px;width:1px;height:15px;background:#f0d8d8"></div>
<div style="left:414px;top:298px;width:1px;height:15px;background:#f0d8d8"></div>
<div style="left:638px;top:298px;width:1px;height:15px;background:#f0d8d8"></div>
<div class="t" style="left:13px;top:299px;height:14px;line-height:14px;width:61px;text-align:right;color:#000">22803</div>
<div class="t" style="left:79px;top:299px;height:14px;line-height:14px;width:59px;text-align:right;color:#000">5519</div>
<div class="t" style="left:145px;top:299px;height:14px;line-height:14px;color:#000;word-spacing:1px;letter-spacing:0.15px">05.7.2008 г. 22:33:58</div>
<div style="left:256px;top:298px;width:124px;height:15px;overflow:hidden"><div class="t" style="left:2px;top:1px;line-height:14px">Сторниране</div></div>
<div class="t" style="left:383px;top:299px;height:14px;line-height:14px;color:#000">005</div>
<div class="t" style="left:417px;top:299px;height:14px;line-height:14px;color:#000">Деница</div>
<div class="t" style="left:639px;top:299px;height:14px;line-height:14px;width:60px;text-align:right;color:#000">-3,20</div>
<div style="left:13px;top:313px;width:691px;height:15px;background:#fefeec"></div>
<div style="left:1px;top:313px;width:11px;height:1px;background:#fff"></div>
<div style="left:78px;top:313px;width:1px;height:15px;background:#eeeee0"></div>
<div style="left:142px;top:313px;width:1px;height:15px;background:#eeeee0"></div>
<div style="left:255px;top:313px;width:1px;height:15px;background:#eeeee0"></div>
<div style="left:380px;top:313px;width:1px;height:15px;background:#eeeee0"></div>
<div style="left:414px;top:313px;width:1px;height:15px;background:#eeeee0"></div>
<div style="left:638px;top:313px;width:1px;height:15px;background:#eeeee0"></div>
<div class="t" style="left:13px;top:314px;height:14px;line-height:14px;width:61px;text-align:right;color:#000">22837</div>
<div class="t" style="left:79px;top:314px;height:14px;line-height:14px;width:59px;text-align:right;color:#000">5519</div>
<div class="t" style="left:145px;top:314px;height:14px;line-height:14px;color:#000;word-spacing:1px;letter-spacing:0.15px">05.7.2008 г. 22:49:34</div>
<div style="left:256px;top:313px;width:124px;height:15px;overflow:hidden"><div class="t" style="left:2px;top:1px;line-height:14px">Добавяне към сметка</div></div>
<div class="t" style="left:383px;top:314px;height:14px;line-height:14px;color:#000">005</div>
<div class="t" style="left:417px;top:314px;height:14px;line-height:14px;color:#000">Натали</div>
<div class="t" style="left:639px;top:314px;height:14px;line-height:14px;width:60px;text-align:right;color:#000">2,50</div>
<div style="left:13px;top:328px;width:691px;height:15px;background:#fefeec"></div>
<div style="left:1px;top:328px;width:11px;height:1px;background:#fff"></div>
<div style="left:78px;top:328px;width:1px;height:15px;background:#eeeee0"></div>
<div style="left:142px;top:328px;width:1px;height:15px;background:#eeeee0"></div>
<div style="left:255px;top:328px;width:1px;height:15px;background:#eeeee0"></div>
<div style="left:380px;top:328px;width:1px;height:15px;background:#eeeee0"></div>
<div style="left:414px;top:328px;width:1px;height:15px;background:#eeeee0"></div>
<div style="left:638px;top:328px;width:1px;height:15px;background:#eeeee0"></div>
<div class="t" style="left:13px;top:329px;height:14px;line-height:14px;width:61px;text-align:right;color:#000">22965</div>
<div class="t" style="left:79px;top:329px;height:14px;line-height:14px;width:59px;text-align:right;color:#000">5519</div>
<div class="t" style="left:145px;top:329px;height:14px;line-height:14px;color:#000;word-spacing:1px;letter-spacing:0.15px">05.7.2008 г. 23:52:32</div>
<div style="left:256px;top:328px;width:124px;height:15px;overflow:hidden"><div class="t" style="left:2px;top:1px;line-height:14px">Добавяне към сметка</div></div>
<div class="t" style="left:383px;top:329px;height:14px;line-height:14px;color:#000">005</div>
<div class="t" style="left:417px;top:329px;height:14px;line-height:14px;color:#000">Натали</div>
<div class="t" style="left:639px;top:329px;height:14px;line-height:14px;width:60px;text-align:right;color:#000">2,50</div>
<div style="left:13px;top:343px;width:691px;height:15px;background:#fefeec"></div>
<div style="left:1px;top:343px;width:11px;height:1px;background:#fff"></div>
<div style="left:78px;top:343px;width:1px;height:15px;background:#eeeee0"></div>
<div style="left:142px;top:343px;width:1px;height:15px;background:#eeeee0"></div>
<div style="left:255px;top:343px;width:1px;height:15px;background:#eeeee0"></div>
<div style="left:380px;top:343px;width:1px;height:15px;background:#eeeee0"></div>
<div style="left:414px;top:343px;width:1px;height:15px;background:#eeeee0"></div>
<div style="left:638px;top:343px;width:1px;height:15px;background:#eeeee0"></div>
<div class="t" style="left:13px;top:344px;height:14px;line-height:14px;width:61px;text-align:right;color:#000">22901</div>
<div class="t" style="left:79px;top:344px;height:14px;line-height:14px;width:59px;text-align:right;color:#000">5519</div>
<div class="t" style="left:145px;top:344px;height:14px;line-height:14px;color:#000;word-spacing:1px;letter-spacing:0.15px">05.7.2008 г. 23:21:31</div>
<div style="left:256px;top:343px;width:124px;height:15px;overflow:hidden"><div class="t" style="left:2px;top:1px;line-height:14px">Добавяне към сметка</div></div>
<div class="t" style="left:383px;top:344px;height:14px;line-height:14px;color:#000">005</div>
<div class="t" style="left:417px;top:344px;height:14px;line-height:14px;color:#000">Натали</div>
<div class="t" style="left:639px;top:344px;height:14px;line-height:14px;width:60px;text-align:right;color:#000">27,00</div>
<div style="left:13px;top:358px;width:691px;height:15px;background:#fefeec"></div>
<div style="left:1px;top:358px;width:11px;height:1px;background:#fff"></div>
<div style="left:78px;top:358px;width:1px;height:15px;background:#eeeee0"></div>
<div style="left:142px;top:358px;width:1px;height:15px;background:#eeeee0"></div>
<div style="left:255px;top:358px;width:1px;height:15px;background:#eeeee0"></div>
<div style="left:380px;top:358px;width:1px;height:15px;background:#eeeee0"></div>
<div style="left:414px;top:358px;width:1px;height:15px;background:#eeeee0"></div>
<div style="left:638px;top:358px;width:1px;height:15px;background:#eeeee0"></div>
<div class="t" style="left:13px;top:359px;height:14px;line-height:14px;width:61px;text-align:right;color:#000">22847</div>
<div class="t" style="left:79px;top:359px;height:14px;line-height:14px;width:59px;text-align:right;color:#000">5519</div>
<div class="t" style="left:145px;top:359px;height:14px;line-height:14px;color:#000;word-spacing:1px;letter-spacing:0.15px">05.7.2008 г. 22:54:39</div>
<div style="left:256px;top:358px;width:124px;height:15px;overflow:hidden"><div class="t" style="left:2px;top:1px;line-height:14px">Добавяне към сметка</div></div>
<div class="t" style="left:383px;top:359px;height:14px;line-height:14px;color:#000">005</div>
<div class="t" style="left:417px;top:359px;height:14px;line-height:14px;color:#000">Натали</div>
<div class="t" style="left:639px;top:359px;height:14px;line-height:14px;width:60px;text-align:right;color:#000">4,80</div>
<div style="left:13px;top:373px;width:691px;height:15px;background:#fefeec"></div>
<div style="left:1px;top:373px;width:11px;height:1px;background:#fff"></div>
<div style="left:78px;top:373px;width:1px;height:15px;background:#eeeee0"></div>
<div style="left:142px;top:373px;width:1px;height:15px;background:#eeeee0"></div>
<div style="left:255px;top:373px;width:1px;height:15px;background:#eeeee0"></div>
<div style="left:380px;top:373px;width:1px;height:15px;background:#eeeee0"></div>
<div style="left:414px;top:373px;width:1px;height:15px;background:#eeeee0"></div>
<div style="left:638px;top:373px;width:1px;height:15px;background:#eeeee0"></div>
<div class="t" style="left:13px;top:374px;height:14px;line-height:14px;width:61px;text-align:right;color:#000">23025</div>
<div class="t" style="left:79px;top:374px;height:14px;line-height:14px;width:59px;text-align:right;color:#000">5519</div>
<div class="t" style="left:145px;top:374px;height:14px;line-height:14px;color:#000;word-spacing:1px;letter-spacing:0.15px">06.7.2008 г. 00:21:36</div>
<div style="left:256px;top:373px;width:124px;height:15px;overflow:hidden"><div class="t" style="left:2px;top:1px;line-height:14px">Добавяне към сметка</div></div>
<div class="t" style="left:383px;top:374px;height:14px;line-height:14px;color:#000">005</div>
<div class="t" style="left:417px;top:374px;height:14px;line-height:14px;color:#000">Натали</div>
<div class="t" style="left:639px;top:374px;height:14px;line-height:14px;width:60px;text-align:right;color:#000">0,80</div>
<div style="left:13px;top:388px;width:691px;height:15px;background:#fefeec"></div>
<div style="left:1px;top:388px;width:11px;height:1px;background:#fff"></div>
<div style="left:78px;top:388px;width:1px;height:15px;background:#eeeee0"></div>
<div style="left:142px;top:388px;width:1px;height:15px;background:#eeeee0"></div>
<div style="left:255px;top:388px;width:1px;height:15px;background:#eeeee0"></div>
<div style="left:380px;top:388px;width:1px;height:15px;background:#eeeee0"></div>
<div style="left:414px;top:388px;width:1px;height:15px;background:#eeeee0"></div>
<div style="left:638px;top:388px;width:1px;height:15px;background:#eeeee0"></div>
<div class="t" style="left:13px;top:389px;height:14px;line-height:14px;width:61px;text-align:right;color:#000">22894</div>
<div class="t" style="left:79px;top:389px;height:14px;line-height:14px;width:59px;text-align:right;color:#000">5519</div>
<div class="t" style="left:145px;top:389px;height:14px;line-height:14px;color:#000;word-spacing:1px;letter-spacing:0.15px">05.7.2008 г. 23:16:09</div>
<div style="left:256px;top:388px;width:124px;height:15px;overflow:hidden"><div class="t" style="left:2px;top:1px;line-height:14px">Добавяне към сметка</div></div>
<div class="t" style="left:383px;top:389px;height:14px;line-height:14px;color:#000">005</div>
<div class="t" style="left:417px;top:389px;height:14px;line-height:14px;color:#000">Натали</div>
<div class="t" style="left:639px;top:389px;height:14px;line-height:14px;width:60px;text-align:right;color:#000">1,60</div>
<div style="left:13px;top:403px;width:691px;height:15px;background:#fefeec"></div>
<div style="left:1px;top:403px;width:11px;height:1px;background:#fff"></div>
<div style="left:78px;top:403px;width:1px;height:15px;background:#eeeee0"></div>
<div style="left:142px;top:403px;width:1px;height:15px;background:#eeeee0"></div>
<div style="left:255px;top:403px;width:1px;height:15px;background:#eeeee0"></div>
<div style="left:380px;top:403px;width:1px;height:15px;background:#eeeee0"></div>
<div style="left:414px;top:403px;width:1px;height:15px;background:#eeeee0"></div>
<div style="left:638px;top:403px;width:1px;height:15px;background:#eeeee0"></div>
<div class="t" style="left:13px;top:404px;height:14px;line-height:14px;width:61px;text-align:right;color:#000">22794</div>
<div class="t" style="left:79px;top:404px;height:14px;line-height:14px;width:59px;text-align:right;color:#000">5519</div>
<div class="t" style="left:145px;top:404px;height:14px;line-height:14px;color:#000;word-spacing:1px;letter-spacing:0.15px">05.7.2008 г. 22:31:14</div>
<div style="left:256px;top:403px;width:124px;height:15px;overflow:hidden"><div class="t" style="left:2px;top:1px;line-height:14px">Добавяне към сметка</div></div>
<div class="t" style="left:383px;top:404px;height:14px;line-height:14px;color:#000">005</div>
<div class="t" style="left:417px;top:404px;height:14px;line-height:14px;color:#000">Натали</div>
<div class="t" style="left:639px;top:404px;height:14px;line-height:14px;width:60px;text-align:right;color:#000">3,20</div>
<div style="left:13px;top:418px;width:691px;height:15px;background:#d9f9d9"></div>
<div style="left:1px;top:418px;width:11px;height:1px;background:#fff"></div>
<div style="left:78px;top:418px;width:1px;height:15px;background:#e4f4e4"></div>
<div style="left:142px;top:418px;width:1px;height:15px;background:#e4f4e4"></div>
<div style="left:255px;top:418px;width:1px;height:15px;background:#e4f4e4"></div>
<div style="left:380px;top:418px;width:1px;height:15px;background:#e4f4e4"></div>
<div style="left:414px;top:418px;width:1px;height:15px;background:#e4f4e4"></div>
<div style="left:638px;top:418px;width:1px;height:15px;background:#e4f4e4"></div>
<div class="t" style="left:13px;top:419px;height:14px;line-height:14px;width:61px;text-align:right;color:#000">23039</div>
<div class="t" style="left:79px;top:419px;height:14px;line-height:14px;width:59px;text-align:right;color:#000">5519</div>
<div class="t" style="left:145px;top:419px;height:14px;line-height:14px;color:#000;word-spacing:1px;letter-spacing:0.15px">06.7.2008 г. 00:27:22</div>
<div style="left:256px;top:418px;width:124px;height:15px;overflow:hidden"><div class="t" style="left:2px;top:1px;line-height:14px">Закриване на сметка</div></div>
<div class="t" style="left:383px;top:419px;height:14px;line-height:14px;color:#000">005</div>
<div class="t" style="left:417px;top:419px;height:14px;line-height:14px;color:#000">Натали</div>
<div class="t" style="left:639px;top:419px;height:14px;line-height:14px;width:60px;text-align:right;color:#000">186,80</div>
<div style="left:13px;top:433px;width:691px;height:15px;background:#dcecfa"></div>
<div style="left:1px;top:433px;width:11px;height:1px;background:#fff"></div>
<div style="left:78px;top:433px;width:1px;height:15px;background:#e8f0f8"></div>
<div style="left:142px;top:433px;width:1px;height:15px;background:#e8f0f8"></div>
<div style="left:255px;top:433px;width:1px;height:15px;background:#e8f0f8"></div>
<div style="left:380px;top:433px;width:1px;height:15px;background:#e8f0f8"></div>
<div style="left:414px;top:433px;width:1px;height:15px;background:#e8f0f8"></div>
<div style="left:638px;top:433px;width:1px;height:15px;background:#e8f0f8"></div>
<div class="t" style="left:13px;top:434px;height:14px;line-height:14px;width:61px;text-align:right;color:#000">22701</div>
<div class="t" style="left:79px;top:434px;height:14px;line-height:14px;width:59px;text-align:right;color:#000">5519</div>
<div class="t" style="left:145px;top:434px;height:14px;line-height:14px;color:#000;word-spacing:1px;letter-spacing:0.15px">05.7.2008 г. 21:30:43</div>
<div style="left:256px;top:433px;width:124px;height:15px;overflow:hidden"><div class="t" style="left:2px;top:1px;line-height:14px">Нова сметка</div></div>
<div class="t" style="left:383px;top:434px;height:14px;line-height:14px;color:#000">005</div>
<div class="t" style="left:417px;top:434px;height:14px;line-height:14px;color:#000">Натали</div>
<div class="t" style="left:639px;top:434px;height:14px;line-height:14px;width:60px;text-align:right;color:#000"></div>
<div style="left:13px;top:448px;width:691px;height:15px;background:#fefeec"></div>
<div style="left:1px;top:448px;width:11px;height:1px;background:#fff"></div>
<div style="left:78px;top:448px;width:1px;height:15px;background:#eeeee0"></div>
<div style="left:142px;top:448px;width:1px;height:15px;background:#eeeee0"></div>
<div style="left:255px;top:448px;width:1px;height:15px;background:#eeeee0"></div>
<div style="left:380px;top:448px;width:1px;height:15px;background:#eeeee0"></div>
<div style="left:414px;top:448px;width:1px;height:15px;background:#eeeee0"></div>
<div style="left:638px;top:448px;width:1px;height:15px;background:#eeeee0"></div>
<div class="t" style="left:13px;top:449px;height:14px;line-height:14px;width:61px;text-align:right;color:#000">22774</div>
<div class="t" style="left:79px;top:449px;height:14px;line-height:14px;width:59px;text-align:right;color:#000">5527</div>
<div class="t" style="left:145px;top:449px;height:14px;line-height:14px;color:#000;word-spacing:1px;letter-spacing:0.15px">05.7.2008 г. 22:20:19</div>
<div style="left:256px;top:448px;width:124px;height:15px;overflow:hidden"><div class="t" style="left:2px;top:1px;line-height:14px">Добавяне към сметка</div></div>
<div class="t" style="left:383px;top:449px;height:14px;line-height:14px;color:#000">007</div>
<div class="t" style="left:417px;top:449px;height:14px;line-height:14px;color:#000">Натали</div>
<div class="t" style="left:639px;top:449px;height:14px;line-height:14px;width:60px;text-align:right;color:#000">32,60</div>
<div style="left:13px;top:463px;width:691px;height:15px;background:#fcdcdc"></div>
<div style="left:1px;top:463px;width:11px;height:1px;background:#fff"></div>
<div style="left:78px;top:463px;width:1px;height:15px;background:#f0d8d8"></div>
<div style="left:142px;top:463px;width:1px;height:15px;background:#f0d8d8"></div>
<div style="left:255px;top:463px;width:1px;height:15px;background:#f0d8d8"></div>
<div style="left:380px;top:463px;width:1px;height:15px;background:#f0d8d8"></div>
<div style="left:414px;top:463px;width:1px;height:15px;background:#f0d8d8"></div>
<div style="left:638px;top:463px;width:1px;height:15px;background:#f0d8d8"></div>
<div class="t" style="left:13px;top:464px;height:14px;line-height:14px;width:61px;text-align:right;color:#000">22806</div>
<div class="t" style="left:79px;top:464px;height:14px;line-height:14px;width:59px;text-align:right;color:#000">5527</div>
<div class="t" style="left:145px;top:464px;height:14px;line-height:14px;color:#000;word-spacing:1px;letter-spacing:0.15px">05.7.2008 г. 22:35:19</div>
<div style="left:256px;top:463px;width:124px;height:15px;overflow:hidden"><div class="t" style="left:2px;top:1px;line-height:14px">Сторниране</div></div>
<div class="t" style="left:383px;top:464px;height:14px;line-height:14px;color:#000">007</div>
<div class="t" style="left:417px;top:464px;height:14px;line-height:14px;color:#000">Деница</div>
<div class="t" style="left:639px;top:464px;height:14px;line-height:14px;width:60px;text-align:right;color:#000">-1,60</div>
<div style="left:13px;top:478px;width:691px;height:15px;background:#fefeec"></div>
<div style="left:1px;top:478px;width:11px;height:1px;background:#fff"></div>
<div style="left:78px;top:478px;width:1px;height:15px;background:#eeeee0"></div>
<div style="left:142px;top:478px;width:1px;height:15px;background:#eeeee0"></div>
<div style="left:255px;top:478px;width:1px;height:15px;background:#eeeee0"></div>
<div style="left:380px;top:478px;width:1px;height:15px;background:#eeeee0"></div>
<div style="left:414px;top:478px;width:1px;height:15px;background:#eeeee0"></div>
<div style="left:638px;top:478px;width:1px;height:15px;background:#eeeee0"></div>
<div class="t" style="left:13px;top:479px;height:14px;line-height:14px;width:61px;text-align:right;color:#000">22807</div>
<div class="t" style="left:79px;top:479px;height:14px;line-height:14px;width:59px;text-align:right;color:#000">5527</div>
<div class="t" style="left:145px;top:479px;height:14px;line-height:14px;color:#000;word-spacing:1px;letter-spacing:0.15px">05.7.2008 г. 22:35:26</div>
<div style="left:256px;top:478px;width:124px;height:15px;overflow:hidden"><div class="t" style="left:2px;top:1px;line-height:14px">Добавяне към сметка</div></div>
<div class="t" style="left:383px;top:479px;height:14px;line-height:14px;color:#000">007</div>
<div class="t" style="left:417px;top:479px;height:14px;line-height:14px;color:#000">Деница</div>
<div class="t" style="left:639px;top:479px;height:14px;line-height:14px;width:60px;text-align:right;color:#000">2,00</div>
<div style="left:13px;top:493px;width:691px;height:15px;background:#d9f9d9"></div>
<div style="left:1px;top:493px;width:11px;height:1px;background:#fff"></div>
<div style="left:78px;top:493px;width:1px;height:15px;background:#e4f4e4"></div>
<div style="left:142px;top:493px;width:1px;height:15px;background:#e4f4e4"></div>
<div style="left:255px;top:493px;width:1px;height:15px;background:#e4f4e4"></div>
<div style="left:380px;top:493px;width:1px;height:15px;background:#e4f4e4"></div>
<div style="left:414px;top:493px;width:1px;height:15px;background:#e4f4e4"></div>
<div style="left:638px;top:493px;width:1px;height:15px;background:#e4f4e4"></div>
<div class="t" style="left:13px;top:494px;height:14px;line-height:14px;width:61px;text-align:right;color:#000">22928</div>
<div class="t" style="left:79px;top:494px;height:14px;line-height:14px;width:59px;text-align:right;color:#000">5527</div>
<div class="t" style="left:145px;top:494px;height:14px;line-height:14px;color:#000;word-spacing:1px;letter-spacing:0.15px">05.7.2008 г. 23:34:48</div>
<div style="left:256px;top:493px;width:124px;height:15px;overflow:hidden"><div class="t" style="left:2px;top:1px;line-height:14px">Закриване на сметка</div></div>
<div class="t" style="left:383px;top:494px;height:14px;line-height:14px;color:#000">007</div>
<div class="t" style="left:417px;top:494px;height:14px;line-height:14px;color:#000">Натали</div>
<div class="t" style="left:639px;top:494px;height:14px;line-height:14px;width:60px;text-align:right;color:#000">33,00</div>
<div style="left:13px;top:508px;width:691px;height:15px;background:#dcecfa"></div>
<div style="left:1px;top:508px;width:11px;height:1px;background:#fff"></div>
<div style="left:78px;top:508px;width:1px;height:15px;background:#e8f0f8"></div>
<div style="left:142px;top:508px;width:1px;height:15px;background:#e8f0f8"></div>
<div style="left:255px;top:508px;width:1px;height:15px;background:#e8f0f8"></div>
<div style="left:380px;top:508px;width:1px;height:15px;background:#e8f0f8"></div>
<div style="left:414px;top:508px;width:1px;height:15px;background:#e8f0f8"></div>
<div style="left:638px;top:508px;width:1px;height:15px;background:#e8f0f8"></div>
<div class="t" style="left:13px;top:509px;height:14px;line-height:14px;width:61px;text-align:right;color:#000">22772</div>
<div class="t" style="left:79px;top:509px;height:14px;line-height:14px;width:59px;text-align:right;color:#000">5527</div>
<div class="t" style="left:145px;top:509px;height:14px;line-height:14px;color:#000;word-spacing:1px;letter-spacing:0.15px">05.7.2008 г. 22:18:27</div>
<div style="left:256px;top:508px;width:124px;height:15px;overflow:hidden"><div class="t" style="left:2px;top:1px;line-height:14px">Нова сметка</div></div>
<div class="t" style="left:383px;top:509px;height:14px;line-height:14px;color:#000">007</div>
<div class="t" style="left:417px;top:509px;height:14px;line-height:14px;color:#000">Натали</div>
<div class="t" style="left:639px;top:509px;height:14px;line-height:14px;width:60px;text-align:right;color:#000"></div>
<div style="left:13px;top:523px;width:691px;height:15px;background:#fefeec"></div>
<div style="left:1px;top:523px;width:11px;height:1px;background:#fff"></div>
<div style="left:78px;top:523px;width:1px;height:15px;background:#eeeee0"></div>
<div style="left:142px;top:523px;width:1px;height:15px;background:#eeeee0"></div>
<div style="left:255px;top:523px;width:1px;height:15px;background:#eeeee0"></div>
<div style="left:380px;top:523px;width:1px;height:15px;background:#eeeee0"></div>
<div style="left:414px;top:523px;width:1px;height:15px;background:#eeeee0"></div>
<div style="left:638px;top:523px;width:1px;height:15px;background:#eeeee0"></div>
<div class="t" style="left:13px;top:524px;height:14px;line-height:14px;width:61px;text-align:right;color:#000">22890</div>
<div class="t" style="left:79px;top:524px;height:14px;line-height:14px;width:59px;text-align:right;color:#000">5542</div>
<div class="t" style="left:145px;top:524px;height:14px;line-height:14px;color:#000;word-spacing:1px;letter-spacing:0.15px">05.7.2008 г. 23:13:45</div>
<div style="left:256px;top:523px;width:124px;height:15px;overflow:hidden"><div class="t" style="left:2px;top:1px;line-height:14px">Добавяне към сметка</div></div>
<div class="t" style="left:383px;top:524px;height:14px;line-height:14px;color:#000">015</div>
<div class="t" style="left:417px;top:524px;height:14px;line-height:14px;color:#000">Натали</div>
<div class="t" style="left:639px;top:524px;height:14px;line-height:14px;width:60px;text-align:right;color:#000">7,50</div>
<div style="left:13px;top:538px;width:691px;height:15px;background:#fefeec"></div>
<div style="left:1px;top:538px;width:11px;height:1px;background:#fff"></div>
<div style="left:78px;top:538px;width:1px;height:15px;background:#eeeee0"></div>
<div style="left:142px;top:538px;width:1px;height:15px;background:#eeeee0"></div>
<div style="left:255px;top:538px;width:1px;height:15px;background:#eeeee0"></div>
<div style="left:380px;top:538px;width:1px;height:15px;background:#eeeee0"></div>
<div style="left:414px;top:538px;width:1px;height:15px;background:#eeeee0"></div>
<div style="left:638px;top:538px;width:1px;height:15px;background:#eeeee0"></div>
<div class="t" style="left:13px;top:539px;height:14px;line-height:14px;width:61px;text-align:right;color:#000">23003</div>
<div class="t" style="left:79px;top:539px;height:14px;line-height:14px;width:59px;text-align:right;color:#000">5542</div>
<div class="t" style="left:145px;top:539px;height:14px;line-height:14px;color:#000;word-spacing:1px;letter-spacing:0.15px">06.7.2008 г. 00:05:27</div>
<div style="left:256px;top:538px;width:124px;height:15px;overflow:hidden"><div class="t" style="left:2px;top:1px;line-height:14px">Добавяне към сметка</div></div>
<div class="t" style="left:383px;top:539px;height:14px;line-height:14px;color:#000">015</div>
<div class="t" style="left:417px;top:539px;height:14px;line-height:14px;color:#000">Натали</div>
<div class="t" style="left:639px;top:539px;height:14px;line-height:14px;width:60px;text-align:right;color:#000">3,90</div>
<div style="left:13px;top:553px;width:691px;height:15px;background:#c8c6df"></div>
<div style="left:1px;top:553px;width:11px;height:1px;background:#fff"></div>
<div style="left:78px;top:553px;width:1px;height:15px;background:#d8d6ea"></div>
<div style="left:142px;top:553px;width:1px;height:15px;background:#d8d6ea"></div>
<div style="left:255px;top:553px;width:1px;height:15px;background:#d8d6ea"></div>
<div style="left:380px;top:553px;width:1px;height:15px;background:#d8d6ea"></div>
<div style="left:414px;top:553px;width:1px;height:15px;background:#d8d6ea"></div>
<div style="left:638px;top:553px;width:1px;height:15px;background:#d8d6ea"></div>
<div style="left:78px;top:553px;width:65px;height:15px;background:#0a246a;outline:1px dotted #c8c6df;outline-offset:-1px"></div>
<svg style="position:absolute;left:4px;top:556px" width="5" height="9" viewBox="0 0 5 9"><path d="M0 0 L5 4.5 L0 9z" fill="#000"/></svg>
<div class="t" style="left:13px;top:554px;height:14px;line-height:14px;width:61px;text-align:right;color:#000">22883</div>
<div class="t" style="left:79px;top:554px;height:14px;line-height:14px;width:59px;text-align:right;color:#fff">5542</div>
<div class="t" style="left:145px;top:554px;height:14px;line-height:14px;color:#000;word-spacing:1px;letter-spacing:0.15px">05.7.2008 г. 23:06:48</div>
<div style="left:256px;top:553px;width:124px;height:15px;overflow:hidden"><div class="t" style="left:2px;top:1px;line-height:14px">Добавяне към сметка</div></div>
<div class="t" style="left:383px;top:554px;height:14px;line-height:14px;color:#000">015</div>
<div class="t" style="left:417px;top:554px;height:14px;line-height:14px;color:#000">Натали</div>
<div class="t" style="left:639px;top:554px;height:14px;line-height:14px;width:60px;text-align:right;color:#000">27,50</div>
<div style="left:13px;top:568px;width:691px;height:15px;background:#d9f9d9"></div>
<div style="left:1px;top:568px;width:11px;height:1px;background:#fff"></div>
<div style="left:78px;top:568px;width:1px;height:15px;background:#e4f4e4"></div>
<div style="left:142px;top:568px;width:1px;height:15px;background:#e4f4e4"></div>
<div style="left:255px;top:568px;width:1px;height:15px;background:#e4f4e4"></div>
<div style="left:380px;top:568px;width:1px;height:15px;background:#e4f4e4"></div>
<div style="left:414px;top:568px;width:1px;height:15px;background:#e4f4e4"></div>
<div style="left:638px;top:568px;width:1px;height:15px;background:#e4f4e4"></div>
<div class="t" style="left:13px;top:569px;height:14px;line-height:14px;width:61px;text-align:right;color:#000">23023</div>
<div class="t" style="left:79px;top:569px;height:14px;line-height:14px;width:59px;text-align:right;color:#000">5542</div>
<div class="t" style="left:145px;top:569px;height:14px;line-height:14px;color:#000;word-spacing:1px;letter-spacing:0.15px">06.7.2008 г. 00:20:38</div>
<div style="left:256px;top:568px;width:124px;height:15px;overflow:hidden"><div class="t" style="left:2px;top:1px;line-height:14px">Закриване на сметка</div></div>
<div class="t" style="left:383px;top:569px;height:14px;line-height:14px;color:#000">015</div>
<div class="t" style="left:417px;top:569px;height:14px;line-height:14px;color:#000">Деница</div>
<div class="t" style="left:639px;top:569px;height:14px;line-height:14px;width:60px;text-align:right;color:#000">69,00</div>
<div style="left:13px;top:583px;width:691px;height:15px;background:#dcecfa"></div>
<div style="left:1px;top:583px;width:11px;height:1px;background:#fff"></div>
<div style="left:78px;top:583px;width:1px;height:15px;background:#e8f0f8"></div>
<div style="left:142px;top:583px;width:1px;height:15px;background:#e8f0f8"></div>
<div style="left:255px;top:583px;width:1px;height:15px;background:#e8f0f8"></div>
<div style="left:380px;top:583px;width:1px;height:15px;background:#e8f0f8"></div>
<div style="left:414px;top:583px;width:1px;height:15px;background:#e8f0f8"></div>
<div style="left:638px;top:583px;width:1px;height:15px;background:#e8f0f8"></div>
<div class="t" style="left:13px;top:584px;height:14px;line-height:14px;width:61px;text-align:right;color:#000">22879</div>
<div class="t" style="left:79px;top:584px;height:14px;line-height:14px;width:59px;text-align:right;color:#000">5542</div>
<div class="t" style="left:145px;top:584px;height:14px;line-height:14px;color:#000;word-spacing:1px;letter-spacing:0.15px">05.7.2008 г. 23:05:31</div>
<div style="left:256px;top:583px;width:124px;height:15px;overflow:hidden"><div class="t" style="left:2px;top:1px;line-height:14px">Нова сметка</div></div>
<div class="t" style="left:383px;top:584px;height:14px;line-height:14px;color:#000">015</div>
<div class="t" style="left:417px;top:584px;height:14px;line-height:14px;color:#000">Натали</div>
<div class="t" style="left:639px;top:584px;height:14px;line-height:14px;width:60px;text-align:right;color:#000"></div>
<div style="left:13px;top:598px;width:691px;height:15px;background:#fefeec"></div>
<div style="left:1px;top:598px;width:11px;height:1px;background:#fff"></div>
<div style="left:78px;top:598px;width:1px;height:15px;background:#eeeee0"></div>
<div style="left:142px;top:598px;width:1px;height:15px;background:#eeeee0"></div>
<div style="left:255px;top:598px;width:1px;height:15px;background:#eeeee0"></div>
<div style="left:380px;top:598px;width:1px;height:15px;background:#eeeee0"></div>
<div style="left:414px;top:598px;width:1px;height:15px;background:#eeeee0"></div>
<div style="left:638px;top:598px;width:1px;height:15px;background:#eeeee0"></div>
<div class="t" style="left:13px;top:599px;height:14px;line-height:14px;width:61px;text-align:right;color:#000">23171</div>
<div class="t" style="left:79px;top:599px;height:14px;line-height:14px;width:59px;text-align:right;color:#000">5569</div>
<div class="t" style="left:145px;top:599px;height:14px;line-height:14px;color:#000;word-spacing:1px;letter-spacing:0.15px">06.7.2008 г. 09:09:50</div>
<div style="left:256px;top:598px;width:124px;height:15px;overflow:hidden"><div class="t" style="left:2px;top:1px;line-height:14px">Добавяне към сметка</div></div>
<div class="t" style="left:383px;top:599px;height:14px;line-height:14px;color:#000">111</div>
<div class="t" style="left:417px;top:599px;height:14px;line-height:14px;color:#000">Натали</div>
<div class="t" style="left:639px;top:599px;height:14px;line-height:14px;width:60px;text-align:right;color:#000">3,00</div>
<div style="left:13px;top:613px;width:691px;height:15px;background:#d9f9d9"></div>
<div style="left:1px;top:613px;width:11px;height:1px;background:#fff"></div>
<div style="left:78px;top:613px;width:1px;height:15px;background:#e4f4e4"></div>
<div style="left:142px;top:613px;width:1px;height:15px;background:#e4f4e4"></div>
<div style="left:255px;top:613px;width:1px;height:15px;background:#e4f4e4"></div>
<div style="left:380px;top:613px;width:1px;height:15px;background:#e4f4e4"></div>
<div style="left:414px;top:613px;width:1px;height:15px;background:#e4f4e4"></div>
<div style="left:638px;top:613px;width:1px;height:15px;background:#e4f4e4"></div>
<div class="t" style="left:13px;top:614px;height:14px;line-height:14px;width:61px;text-align:right;color:#000">23257</div>
<div class="t" style="left:79px;top:614px;height:14px;line-height:14px;width:59px;text-align:right;color:#000">5569</div>
<div class="t" style="left:145px;top:614px;height:14px;line-height:14px;color:#000;word-spacing:1px;letter-spacing:0.15px">06.7.2008 г. 18:19:37</div>
<div style="left:256px;top:613px;width:124px;height:15px;overflow:hidden"><div class="t" style="left:2px;top:1px;line-height:14px">Закриване на сметка</div></div>
<div class="t" style="left:383px;top:614px;height:14px;line-height:14px;color:#000">111</div>
<div class="t" style="left:417px;top:614px;height:14px;line-height:14px;color:#000">Деница</div>
<div class="t" style="left:639px;top:614px;height:14px;line-height:14px;width:60px;text-align:right;color:#000">0,36</div>
<div style="left:13px;top:628px;width:691px;height:15px;background:#dcecfa"></div>
<div style="left:1px;top:628px;width:11px;height:1px;background:#fff"></div>
<div style="left:78px;top:628px;width:1px;height:15px;background:#e8f0f8"></div>
<div style="left:142px;top:628px;width:1px;height:15px;background:#e8f0f8"></div>
<div style="left:255px;top:628px;width:1px;height:15px;background:#e8f0f8"></div>
<div style="left:380px;top:628px;width:1px;height:15px;background:#e8f0f8"></div>
<div style="left:414px;top:628px;width:1px;height:15px;background:#e8f0f8"></div>
<div style="left:638px;top:628px;width:1px;height:15px;background:#e8f0f8"></div>
<div class="t" style="left:13px;top:629px;height:14px;line-height:14px;width:61px;text-align:right;color:#000">23170</div>
<div class="t" style="left:79px;top:629px;height:14px;line-height:14px;width:59px;text-align:right;color:#000">5569</div>
<div class="t" style="left:145px;top:629px;height:14px;line-height:14px;color:#000;word-spacing:1px;letter-spacing:0.15px">06.7.2008 г. 09:09:46</div>
<div style="left:256px;top:628px;width:124px;height:15px;overflow:hidden"><div class="t" style="left:2px;top:1px;line-height:14px">Нова сметка</div></div>
<div class="t" style="left:383px;top:629px;height:14px;line-height:14px;color:#000">111</div>
<div class="t" style="left:417px;top:629px;height:14px;line-height:14px;color:#000">Натали</div>
<div class="t" style="left:639px;top:629px;height:14px;line-height:14px;width:60px;text-align:right;color:#000"></div>
</div>
<div style="left:1px;top:643px;width:11px;height:13px;background:#fff"></div>
<div style="left:13px;top:656px;width:691px;height:14px;background:#fdf8ee"></div>
<div style="left:78px;top:656px;width:1px;height:14px;background:#f0ebe0"></div>
<div style="left:142px;top:656px;width:1px;height:14px;background:#f0ebe0"></div>
<div style="left:255px;top:656px;width:1px;height:14px;background:#f0ebe0"></div>
<div style="left:380px;top:656px;width:1px;height:14px;background:#f0ebe0"></div>
<div style="left:414px;top:656px;width:1px;height:14px;background:#f0ebe0"></div>
<div style="left:638px;top:656px;width:1px;height:14px;background:#f0ebe0"></div>
<div class="t" style="left:15px;top:655px;height:14px;line-height:14px;">Общо: 84</div>
<div class="t" style="left:639px;top:655px;height:14px;line-height:14px;width:60px;text-align:right">841,34</div>
<div style="left:902px;top:178px;width:16px;height:492px;background-color:#fff;background-image:linear-gradient(45deg,#d4d0c8 25%,transparent 25%,transparent 75%,#d4d0c8 75%),linear-gradient(45deg,#d4d0c8 25%,transparent 25%,transparent 75%,#d4d0c8 75%);background-size:2px 2px;background-position:0 0,1px 1px;"></div>
<div style="left:902px;top:177px;width:16px;height:17px;background:#d4d0c8;box-shadow: inset 1px 1px #d4d0c8, inset 2px 2px #fff, inset -1px -1px #404040, inset -2px -2px #808080"></div>
<svg style="position:absolute;left:906px;top:184px" width="7" height="4" viewBox="0 0 7 4"><path d="M0 4h7L3.5 0z" fill="#000"/></svg>
<div style="left:902px;top:514px;width:16px;height:119px;background:#d4d0c8;box-shadow: inset 1px 1px #d4d0c8, inset 2px 2px #fff, inset -1px -1px #404040, inset -2px -2px #808080"></div>
<div style="left:902px;top:653px;width:16px;height:16px;background:#d4d0c8;box-shadow: inset 1px 1px #d4d0c8, inset 2px 2px #fff, inset -1px -1px #404040, inset -2px -2px #808080"></div>
<svg style="position:absolute;left:906px;top:658px" width="7" height="4" viewBox="0 0 7 4"><path d="M0 0h7L3.5 4z" fill="#000"/></svg>
<div style="left:927px;top:148px;width:91px;height:25px;background:#d4d0c8;box-shadow: inset -1px -1px #404040, inset 1px 1px #fff, inset -2px -2px #808080"></div>
<svg style="position:absolute;left:931px;top:152px" width="17" height="17" viewBox="0 0 17 17"><path d="M3.5 8 Q4 3 9 3 Q12 3 13.5 6" fill="none" stroke="#1a60d0" stroke-width="2.6"/><path d="M10.5 7 L16.5 7 L13.5 11z" fill="#1a60d0"/><path d="M13.5 9.5 Q13 14 8 14 Q5 14 3.5 11" fill="none" stroke="#1a60d0" stroke-width="2.6"/><path d="M0.5 9.5 L6.5 9.5 L3.5 6z" fill="#1a60d0"/><path d="M5 5 Q7 3.5 10 4" stroke="#80c0ff" fill="none"/></svg>
<div class="t" style="left:957px;top:155px;height:13px;line-height:13px;"><u>З</u>арежда</div>
<div style="left:927px;top:177px;width:91px;height:25px;background:#d4d0c8;box-shadow: inset -1px -1px #404040, inset 1px 1px #fff, inset -2px -2px #808080"></div>
<svg style="position:absolute;left:931px;top:181px" width="17" height="17" viewBox="0 0 17 17"><path d="M0.5 2.5h10v12h-10z" fill="#f0f4f8" stroke="#606870"/><path d="M1 9h9v5H1z" fill="#a8b4bc"/><path d="M2 5h5 M2 7h5" stroke="#8090a0"/><path d="M10 9 L15.5 14.5" stroke="#c09050" stroke-width="2.5"/><circle cx="9" cy="5" r="4" fill="#f4f8ff" stroke="#404850" stroke-width="1.1"/><path d="M7 4 Q8 2.5 10 3" stroke="#a0b0c0" fill="none"/></svg>
<div class="t" style="left:952px;top:184px;height:13px;line-height:13px;"><u>Р</u>азглежда</div>
<div style="left:927px;top:205px;width:91px;height:25px;background:#d4d0c8;box-shadow: inset -1px -1px #404040, inset 1px 1px #fff, inset -2px -2px #808080"></div>
<svg style="position:absolute;left:931px;top:209px" width="17" height="17" viewBox="0 0 17 17"><path d="M4.5 0.5h9v6h-9z" fill="#fff" stroke="#5a6470"/><path d="M6 2.5h6 M6 4.5h6" stroke="#a0a8b0"/><path d="M1.5 6.5h14v6h-14z" fill="#b8c4cc" stroke="#404c58"/><path d="M2 11h13v4H2z" fill="#e8f0f0" stroke="#506070"/><path d="M3 12h11v2H3z" fill="#50a860"/><path d="M11 12h2v1h-2z" fill="#e0ffe0"/></svg>
<div class="t" style="left:964px;top:212px;height:13px;line-height:13px;">Пе<u>ч</u>ат</div>
<div style="left:927px;top:638px;width:91px;height:25px;background:#d4d0c8;box-shadow: inset -1px -1px #404040, inset 1px 1px #fff, inset -2px -2px #808080"></div>
<svg style="position:absolute;left:931px;top:642px" width="17" height="17" viewBox="0 0 17 17"><path d="M1.5 1.5h14v14h-14z" fill="#e03838" stroke="#801818"/><path d="M2 2h13v2H2z" fill="#f08080"/><path d="M4.5 4.5 L12.5 12.5 M12.5 4.5 L4.5 12.5" stroke="#fff" stroke-width="2.2"/></svg>
<div class="t" style="left:964px;top:646px;height:13px;line-height:13px;">Изход</div>
<div style="left:0px;top:670px;width:1024px;height:1px;background:#e8e6e2"></div>
<div style="left:0px;top:671px;width:554px;height:22px;background:#d4d0c8;box-shadow: inset -1px -1px #808080, inset 1px 1px #fff"></div>
<div style="left:3px;top:672px;width:1px;height:20px;background:#fff"></div>
<div style="left:4px;top:672px;width:1px;height:20px;background:#eceae6"></div>
<div style="left:5px;top:672px;width:1px;height:20px;background:#808080"></div>
<div class="t" style="left:12px;top:676px;height:13px;line-height:13px;">Прозорци:</div>
<svg style="position:absolute;left:74px;top:675px" width="13" height="13" viewBox="0 0 13 13"><path d="M0.5 0.5h12v12H0.5z" fill="#d8e8fc" stroke="#3050b0"/><path d="M1 1h11v2H1z" fill="#5070d0"/><path d="M1 6.5h11 M1 9.5h11 M4.5 3v9 M8.5 3v9" stroke="#fff"/></svg>
<div class="t" style="left:91px;top:676px;height:13px;line-height:13px;">Справка персонални отчети</div>
<svg style="position:absolute;left:243px;top:675px" width="13" height="13" viewBox="0 0 13 13"><path d="M0.5 0.5h12v12H0.5z" fill="#d8e8fc" stroke="#3050b0"/><path d="M1 1h11v2H1z" fill="#5070d0"/><path d="M1 6.5h11 M1 9.5h11 M4.5 3v9 M8.5 3v9" stroke="#fff"/></svg>
<div class="t" style="left:259px;top:676px;height:13px;line-height:13px;">Справка сметки</div>
<svg style="position:absolute;left:349px;top:675px" width="13" height="13" viewBox="0 0 13 13"><path d="M0.5 0.5h12v12H0.5z" fill="#e8f0fc" stroke="#3050b0"/><path d="M3 3 L9 9" stroke="#606060" stroke-width="1.5"/><circle cx="5" cy="5" r="2.5" fill="#c0d8f0" stroke="#404040"/></svg>
<div class="t" style="left:366px;top:676px;height:13px;line-height:13px;">Списък</div>
<div style="left:407px;top:672px;width:146px;height:20px;background-color:#fff;background-image:linear-gradient(45deg,#d4d0c8 25%,transparent 25%,transparent 75%,#d4d0c8 75%),linear-gradient(45deg,#d4d0c8 25%,transparent 25%,transparent 75%,#d4d0c8 75%);background-size:2px 2px;background-position:0 0,1px 1px;box-shadow: inset 1px 1px #808080, inset -1px -1px #fff"></div>
<svg style="position:absolute;left:412px;top:676px" width="13" height="13" viewBox="0 0 13 13"><path d="M0.5 0.5h12v12H0.5z" fill="#d8e8fc" stroke="#3050b0"/><path d="M1 1h11v2H1z" fill="#5070d0"/><path d="M1 6.5h11 M1 9.5h11 M4.5 3v9 M8.5 3v9" stroke="#fff"/></svg>
<div class="t" style="left:428px;top:677px;height:13px;line-height:13px;">История на операциите</div>
<div style="left:0px;top:693px;width:1024px;height:1px;background:#fff"></div>
<div style="left:0px;top:694px;width:459px;height:22px;background:#d4d0c8;box-shadow: inset -1px -1px #808080, inset 1px 1px #fff"></div>
<div style="left:3px;top:695px;width:1px;height:20px;background:#fff"></div>
<div style="left:4px;top:695px;width:1px;height:20px;background:#eceae6"></div>
<div style="left:5px;top:695px;width:1px;height:20px;background:#808080"></div>
<div class="t" style="left:12px;top:699px;height:13px;line-height:13px;letter-spacing:0.13px">Атквини потребители:</div>
<svg style="position:absolute;left:138px;top:697px" width="10" height="14" viewBox="0 0 10 14"><circle cx="4.5" cy="3.8" r="3.2" fill="#b8c0b8" stroke="#383838" stroke-width="1.1"/><path d="M3 4.5 Q4.5 6.5 6 4.5" fill="#f0f0f0"/><path d="M0.5 12.5 Q0.5 8 4.5 8 Q8.5 8 8.5 12.5z" fill="#c8c8c8" stroke="#808080"/><path d="M4.5 8.5v3" stroke="#fff"/></svg>
<div class="t" style="left:153px;top:699px;height:13px;line-height:13px;">Неактивен</div>
<svg style="position:absolute;left:216px;top:697px" width="10" height="14" viewBox="0 0 10 14"><circle cx="4.5" cy="3.8" r="3.2" fill="#b8c0b8" stroke="#383838" stroke-width="1.1"/><path d="M3 4.5 Q4.5 6.5 6 4.5" fill="#f0f0f0"/><path d="M0.5 12.5 Q0.5 8 4.5 8 Q8.5 8 8.5 12.5z" fill="#d03040" stroke="#802020"/><path d="M4.5 8.5v3" stroke="#fff"/></svg>
<div class="t" style="left:231px;top:699px;height:13px;line-height:13px;letter-spacing:-0.4px">ЪнриълСофт</div>
<svg style="position:absolute;left:306px;top:697px" width="10" height="14" viewBox="0 0 10 14"><circle cx="4.5" cy="3.8" r="3.2" fill="#b8c0b8" stroke="#383838" stroke-width="1.1"/><path d="M3 4.5 Q4.5 6.5 6 4.5" fill="#f0f0f0"/><path d="M0.5 12.5 Q0.5 8 4.5 8 Q8.5 8 8.5 12.5z" fill="#c8c8c8" stroke="#808080"/><path d="M4.5 8.5v3" stroke="#fff"/></svg>
<div class="t" style="left:320px;top:699px;height:13px;line-height:13px;">Неактивен</div>
<svg style="position:absolute;left:384px;top:697px" width="10" height="14" viewBox="0 0 10 14"><circle cx="4.5" cy="3.8" r="3.2" fill="#b8c0b8" stroke="#383838" stroke-width="1.1"/><path d="M3 4.5 Q4.5 6.5 6 4.5" fill="#f0f0f0"/><path d="M0.5 12.5 Q0.5 8 4.5 8 Q8.5 8 8.5 12.5z" fill="#c8c8c8" stroke="#808080"/><path d="M4.5 8.5v3" stroke="#fff"/></svg>
<div class="t" style="left:398px;top:699px;height:13px;line-height:13px;">Неактивен</div>
<div style="left:0px;top:718px;width:542px;height:20px;background:#d4d0c8;box-shadow: inset 1px 1px #808080, inset -1px -1px #fff"></div>
<div style="left:544px;top:718px;width:178px;height:20px;background:#d4d0c8;box-shadow: inset 1px 1px #808080, inset -1px -1px #fff"></div>
<div style="left:724px;top:718px;width:148px;height:20px;background:#d4d0c8;box-shadow: inset 1px 1px #808080, inset -1px -1px #fff"></div>
<div style="left:874px;top:718px;width:149px;height:20px;background:#d4d0c8;box-shadow: inset 1px 1px #808080, inset -1px -1px #fff"></div>
<svg style="position:absolute;left:551px;top:721px" width="10" height="14" viewBox="0 0 10 14"><circle cx="4.5" cy="3.8" r="3.2" fill="#b8c0b8" stroke="#383838" stroke-width="1.1"/><path d="M3 4.5 Q4.5 6.5 6 4.5" fill="#f0f0f0"/><path d="M0.5 12.5 Q0.5 8 4.5 8 Q8.5 8 8.5 12.5z" fill="#d03040" stroke="#802020"/><path d="M4.5 8.5v3" stroke="#fff"/></svg>
<div class="t" style="left:569px;top:722px;height:13px;line-height:13px;letter-spacing:-0.4px">ЪнриълСофт</div>
<svg style="position:absolute;left:729px;top:720px" width="17" height="17" viewBox="0 0 17 17"><path d="M3 2h7l3 3v9H3z" fill="#f0f0f0" stroke="#404040"/><circle cx="12" cy="12" r="3" fill="#f0c020" stroke="#806000"/><path d="M11 14 L10 17 M13 14 L14 17" stroke="#d02020" stroke-width="1.5"/></svg>
<div class="t" style="left:750px;top:722px;height:13px;line-height:13px;word-spacing:1px;letter-spacing:0.2px">12.6.2008 г.</div>
<svg style="position:absolute;left:878px;top:720px" width="17" height="17" viewBox="0 0 17 17"><circle cx="8.5" cy="4" r="3" fill="#80b0e8" stroke="#3060a0"/><circle cx="4" cy="12" r="3" fill="#80b0e8" stroke="#3060a0"/><circle cx="13" cy="12" r="3" fill="#80b0e8" stroke="#3060a0"/><path d="M7 6 L5 10 M10 6 L12 10 M6 12h4" stroke="#3060a0"/></svg>
<div class="t" style="left:899px;top:722px;height:13px;line-height:13px;">localhost</div>
<div style="left:0px;top:738px;width:1024px;height:1px;background:#d4d0c8"></div>
<div style="left:0px;top:738px;width:1024px;height:30px;background:#d4d0c8"></div>
<div style="left:0px;top:739px;width:1024px;height:1px;background:#fff"></div>
<div style="left:2px;top:742px;width:52px;height:22px;background:#d4d0c8;box-shadow: inset -1px -1px #404040, inset 1px 1px #fff, inset -2px -2px #808080"></div>
<svg style="position:absolute;left:4px;top:744px" width="17" height="16" viewBox="0 0 17 16"><path d="M3.5 1.5 Q6.5 0 11 1.5 L10 7.5 Q6 6 2.2 7z" fill="#f06a20"/><path d="M11.5 2.5 Q13.5 3 16 2.2 L15 9 Q13 9.6 10.5 8.5z" fill="#70c030"/><path d="M2 7.5 Q6 6.2 9.8 8 L8.8 14 Q5 12.4 0.8 13.5z" fill="#3a68e0"/><path d="M10.3 9 Q12.5 10 14.8 9.6 L13.8 15.5 Q11.5 15.8 9.2 14.5z" fill="#f0d010"/><path d="M10.2 8 L9 14.5 M2 7.2 Q6 5.8 10 7.8 Q12.5 9.2 15 9.2" fill="none" stroke="#404030" stroke-width=".7" opacity=".6"/></svg>
<div class="t" style="left:22px;top:746px;height:15px;line-height:15px;font-weight:bold;font-size:12px">Start</div>
<div style="left:61px;top:744px;width:1px;height:20px;background:#fff"></div>
<div style="left:62px;top:744px;width:1px;height:20px;background:#808080"></div>
<svg style="position:absolute;left:70px;top:744px" width="17" height="17" viewBox="0 0 17 17"><path d="M3 2.5 Q3 1.5 4 1.5 H13 Q15.5 1.5 15.5 4 V13 Q15.5 15.5 13 15.5 H4 Q1.5 15.5 1.5 13 V4z" fill="#58a0e8" stroke="#103880" stroke-width="1.2"/><path d="M11 5 H6 Q4.5 5 4.5 6.5 V10.5 Q4.5 12 6 12 H11" fill="none" stroke="#fff" stroke-width="2"/><path d="M8 7.5 H12 V6 L15 8.5 L12 11 V9.5 H8z" fill="#f08020" stroke="#804010" stroke-width=".5"/></svg>
<svg style="position:absolute;left:93px;top:744px" width="17" height="17" viewBox="0 0 17 17"><circle cx="8.5" cy="9" r="5.5" fill="#1e88e0" stroke="#0a50a8"/><path d="M5 9.5 H12.5 Q12.5 6 8.5 6 Q5.5 6 5 9.5 Q5 12.5 8.5 12.5 Q10.5 12.5 12 11.5" fill="#fff" stroke="#fff" stroke-width="1"/><path d="M6.5 8.5 H10.5" stroke="#1e88e0" stroke-width="1.2"/><path d="M1.5 15 Q0 12 6 6 Q13 0 15.5 2 Q16.5 3.5 14 6" fill="none" stroke="#60b8f8" stroke-width="1.3"/></svg>
<svg style="position:absolute;left:117px;top:745px" width="17" height="17" viewBox="0 0 17 17"><path d="M8.5 3.5 L11 0.5 M11 4.5 L13.5 1.5 M13 6 L15.5 3" stroke="#000" stroke-width="1.1"/><path d="M1 9.5 Q2 11 4 12 L7 13 Q9 12.5 10 11.5 L15 7 Q12 4.5 9 4 Q5 5 1 9.5z" fill="#f0d8d0" stroke="#000" stroke-width="1.1"/><path d="M2 8.5 L8.5 4 L14.5 6.5 L8 11z" fill="#c8a040"/><path d="M4 8 L8 6 L12 7 M5 9.5 L9 8 L12.5 8.5" stroke="#7a5010" stroke-width="1" fill="none"/><path d="M3 9 L9 5" stroke="#f8e8a0" stroke-width=".8"/><path d="M6.5 12.5 L7 14.5" stroke="#000" stroke-width="1.6"/><path d="M4 15.5 H10" stroke="#000" stroke-width="1.4"/><path d="M0.5 10 Q0 12 3 12.5" fill="none" stroke="#000" stroke-width="1.1"/></svg>
<div style="left:143px;top:744px;width:1px;height:20px;background:#fff"></div>
<div style="left:144px;top:744px;width:1px;height:20px;background:#808080"></div>
<div style="left:149px;top:742px;width:161px;height:22px;background:#d4d0c8;box-shadow: inset -1px -1px #404040, inset 1px 1px #fff, inset -2px -2px #808080"></div>
<svg style="position:absolute;left:154px;top:745px" width="17" height="17" viewBox="0 0 17 17"><path d="M1 2 L10 1 L15 3 L15 14 L6 15.5 L1 13z" fill="#e8e8f8"/><path d="M10 3 L15 3 L15 14 L10 15z" fill="#9090e0"/><path d="M1 2 L10 3 L15 3" fill="none" stroke="#b0b0d8"/><path d="M0.5 12.5 L6 15 L10 14.5" fill="none" stroke="#303040" stroke-dasharray="1.5 1"/><path d="M3 5h5 M3 7h5 M3 9h5" stroke="#c8c8f0"/></svg>
<div class="t" style="left:173px;top:746px;height:14px;line-height:14px;"><span style="letter-spacing:-0.12px">Manage Your Server</span></div>
<div style="left:313px;top:742px;width:160px;height:22px;background:#d4d0c8;box-shadow: inset -1px -1px #404040, inset 1px 1px #fff, inset -2px -2px #808080"></div>
<svg style="position:absolute;left:318px;top:745px" width="17" height="17" viewBox="0 0 17 17"><path d="M0.5 4 L2 1 L8 0.5 L12 3.5 L11 5 L8 3.5 L6 5 L1.5 5z" fill="#d0d0d0" stroke="#000" stroke-width=".9"/><path d="M3.5 5.5h3v10h-3z" fill="#e8e020" stroke="#000" stroke-width=".8"/><path d="M7.5 7.5h7v7h-7z" fill="#f8f0ff" stroke="#000" stroke-width="1"/><path d="M9.5 9v4.5" stroke="#804020"/><path d="M12 8.5v4.5" stroke="#501060"/></svg>
<div class="t" style="left:337px;top:746px;height:14px;line-height:14px;"><span style="letter-spacing:-0.25px">File Server Management</span></div>
<div style="left:476px;top:742px;width:160px;height:22px;background-color:#fff;background-image:linear-gradient(45deg,#d4d0c8 25%,transparent 25%,transparent 75%,#d4d0c8 75%),linear-gradient(45deg,#d4d0c8 25%,transparent 25%,transparent 75%,#d4d0c8 75%);background-size:2px 2px;background-position:0 0,1px 1px;box-shadow: inset 1px 1px #404040, inset 2px 2px #808080, inset -1px -1px #fff"></div>
<svg style="position:absolute;left:481px;top:745px" width="17" height="17" viewBox="0 0 17 17"><path d="M8.5 3.5 L11 0.5 M11 4.5 L13.5 1.5 M13 6 L15.5 3" stroke="#000" stroke-width="1.1"/><path d="M1 9.5 Q2 11 4 12 L7 13 Q9 12.5 10 11.5 L15 7 Q12 4.5 9 4 Q5 5 1 9.5z" fill="#f0d8d0" stroke="#000" stroke-width="1.1"/><path d="M2 8.5 L8.5 4 L14.5 6.5 L8 11z" fill="#c8a040"/><path d="M4 8 L8 6 L12 7 M5 9.5 L9 8 L12.5 8.5" stroke="#7a5010" stroke-width="1" fill="none"/><path d="M3 9 L9 5" stroke="#f8e8a0" stroke-width=".8"/><path d="M6.5 12.5 L7 14.5" stroke="#000" stroke-width="1.6"/><path d="M4 15.5 H10" stroke="#000" stroke-width="1.4"/><path d="M0.5 10 Q0 12 3 12.5" fill="none" stroke="#000" stroke-width="1.1"/></svg>
<div class="t" style="left:501px;top:747px;height:14px;line-height:14px;font-weight:bold;letter-spacing:0.2px">TouchSale</div>
<div style="left:639px;top:742px;width:160px;height:22px;background:#d4d0c8;box-shadow: inset -1px -1px #404040, inset 1px 1px #fff, inset -2px -2px #808080"></div>
<svg style="position:absolute;left:644px;top:745px" width="17" height="17" viewBox="0 0 17 17"><defs><linearGradient id="gk" x1="0" y1="0" x2="1" y2="0"><stop offset="0" stop-color="#c8dcff"/><stop offset="1" stop-color="#7890e0"/></linearGradient></defs><path d="M2.5 1.5 Q2.5 0.5 4 0.5 H11 Q12.5 0.5 12.5 2 V15 Q12.5 16 11 16 H4 Q2.5 16 2.5 15z" fill="url(#gk)" stroke="#6878b8" stroke-width=".8"/><path d="M4 3 H11 V6 H4z" fill="#5878d8"/><path d="M4 8h2v2H4z M8 8h2v2H8z M6 10h2v2H6z M10 10h1.5v2H10z M4 12h2v2H4z M8 12h2v2H8z" fill="#3050a0"/><path d="M6 8h2v2H6z M4 10h2v2H4z M8 10h2v2H8z M6 12h2v2H6z" fill="#f0f8ff"/></svg>
<div class="t" style="left:663px;top:746px;height:14px;line-height:14px;">Calculator</div>
<div style="left:887px;top:744px;width:1px;height:20px;background:#fff"></div>
<div style="left:888px;top:744px;width:1px;height:20px;background:#808080"></div>
<div style="left:897px;top:746px;width:16px;height:16px;background:#0a2a70"></div>
<div class="t" style="left:897px;top:747px;height:14px;line-height:14px;color:#fff;font-size:10px;width:16px;text-align:center;letter-spacing:-0.3px">BG</div>
<div style="left:917px;top:741px;width:1px;height:25px;background:#808080"></div>
<div style="left:918px;top:741px;width:1px;height:25px;background:#fff"></div>
<div style="left:924px;top:742px;width:98px;height:23px;background:#d4d0c8;box-shadow: inset 1px 1px #808080, inset -1px -1px #fff"></div>
<svg style="position:absolute;left:927px;top:745px" width="16" height="16" viewBox="0 0 16 16"><path d="M6 1h9v7H6z" fill="#80b8f0" stroke="#3070b0"/><path d="M1 6h9v7H1z" fill="#a0d0ff" stroke="#3070b0"/><path d="M3 14h6" stroke="#606060"/></svg>
<svg style="position:absolute;left:946px;top:745px" width="16" height="16" viewBox="0 0 16 16"><path d="M8 3 L3 12 L13 12z" fill="none" stroke="#20a020" stroke-width="1.2"/><circle cx="8" cy="3" r="2.5" fill="#30d030"/><circle cx="3" cy="12" r="2.5" fill="#30d030"/><circle cx="13" cy="12" r="2.5" fill="#30d030"/></svg>
<div style="left:963px;top:745px;width:16px;height:16px;background:#000"></div>
<svg style="position:absolute;left:963px;top:745px" width="16" height="16" viewBox="0 0 16 16"><path d="M1 2 L4 14 L7 2" fill="none" stroke="#20c020" stroke-width="2"/><path d="M9 3v4 M9 4 Q12 2 14 4 V7" fill="none" stroke="#4060e0" stroke-width="1.5"/><path d="M14 10 Q9 9 9 12 Q9 15 14 14" fill="none" stroke="#e03030" stroke-width="1.5"/></svg>
<div class="t" style="left:987px;top:747px;height:13px;line-height:13px;">11:04</div>
</body></html>
